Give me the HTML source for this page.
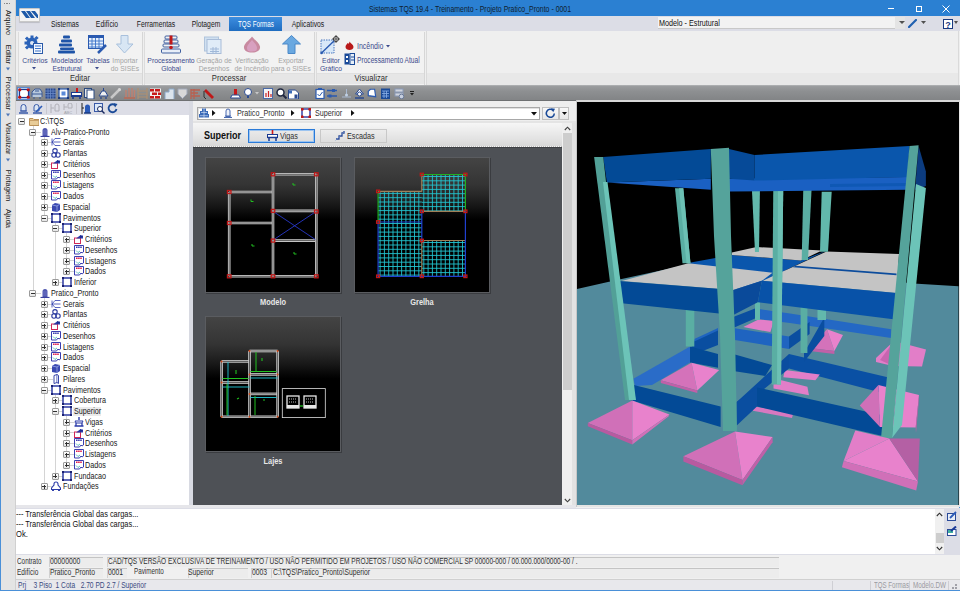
<!DOCTYPE html>
<html><head><meta charset="utf-8">
<style>
*{margin:0;padding:0;box-sizing:border-box}
html,body{width:960px;height:591px;overflow:hidden;background:#f0f0f0;font-family:"Liberation Sans",sans-serif;color:#222}
.a{position:absolute}
.t{position:absolute;white-space:nowrap}
</style></head><body>

<div class="a" style="left:0px;top:0px;width:960px;height:591px;background:#f0f0f0"></div>
<div class="a" style="left:1px;top:0px;width:14px;height:591px;background:#e4e4e4"></div>
<div class="a" style="left:15px;top:0px;width:1px;height:591px;background:#d0d0d0"></div>
<div class="a" style="left:0px;top:0px;width:1px;height:591px;background:#4a90d8"></div>
<div class="a" style="left:959px;top:0px;width:1px;height:591px;background:#4a90d8"></div>
<div class="a" style="left:0px;top:590px;width:960px;height:1px;background:#4a90d8"></div>
<div class="a" style="left:4.0px;top:3px;width:1.3px;height:1.3px;background:#888"></div>
<div class="a" style="left:6.3px;top:3px;width:1.3px;height:1.3px;background:#888"></div>
<div class="a" style="left:8.6px;top:3px;width:1.3px;height:1.3px;background:#888"></div>
<div class="t" style="left:-32px;top:17.3px;width:80px;height:11px;text-align:center;font-size:8px;line-height:11px;color:#202020;transform:rotate(90deg) scaleX(0.93);">Arquivo</div>
<div class="t" style="left:-32px;top:48.5px;width:80px;height:11px;text-align:center;font-size:8px;line-height:11px;color:#202020;transform:rotate(90deg) scaleX(0.93);">Editar</div>
<div class="t" style="left:-32px;top:87.8px;width:80px;height:11px;text-align:center;font-size:8px;line-height:11px;color:#202020;transform:rotate(90deg) scaleX(0.93);">Processar</div>
<div class="t" style="left:-32px;top:132.9px;width:80px;height:11px;text-align:center;font-size:8px;line-height:11px;color:#202020;transform:rotate(90deg) scaleX(0.93);">Visualizar</div>
<div class="t" style="left:-32px;top:179.5px;width:80px;height:11px;text-align:center;font-size:8px;line-height:11px;color:#202020;transform:rotate(90deg) scaleX(0.93);">Plotagem</div>
<div class="t" style="left:-32px;top:212.75px;width:80px;height:11px;text-align:center;font-size:8px;line-height:11px;color:#202020;transform:rotate(90deg) scaleX(0.93);">Ajuda</div>
<svg class="a" style="left:6px;top:66.5px" width="4" height="4" viewBox="0 0 4 4"><polygon points="0.5,0 3.5,2 0.5,4" fill="#5078b8" transform="rotate(90 2 2)"/></svg>
<svg class="a" style="left:6px;top:112.7px" width="4" height="4" viewBox="0 0 4 4"><polygon points="0.5,0 3.5,2 0.5,4" fill="#5078b8" transform="rotate(90 2 2)"/></svg>
<svg class="a" style="left:6px;top:158.4px" width="4" height="4" viewBox="0 0 4 4"><polygon points="0.5,0 3.5,2 0.5,4" fill="#5078b8" transform="rotate(90 2 2)"/></svg>
<div class="a" style="left:16px;top:0px;width:944px;height:16px;background:#2b80d2"></div>
<div class="t" style="left:170px;width:600px;text-align:center;top:3.83px;font-size:9px;line-height:10.35px;color:#102030;font-weight:normal;transform:scaleX(0.77);transform-origin:50% 0;">Sistemas TQS 19.4 - Treinamento - Projeto Pratico_Pronto - 0001</div>
<div class="a" style="left:888px;top:8px;width:6px;height:1px;background:#fff"></div>
<div class="a" style="left:915.5px;top:5.5px;width:6px;height:6px;border:1px solid #fff"></div>
<svg class="a" style="left:942px;top:5px" width="8" height="8" viewBox="0 0 8 8"><path d="M0.5 0.5L7.5 7.5M7.5 0.5L0.5 7.5" stroke="#fff" stroke-width="1"/></svg>
<div class="a" style="left:16px;top:16px;width:944px;height:15px;background:#dcdde6"></div>
<div class="a" style="left:19px;top:8px;width:21px;height:14px;background:#f4f4f4;border:1px solid #c8c8c8;border-radius:1px;box-shadow:0 1px 1px rgba(0,0,0,.15)"></div>
<svg class="a" style="left:21px;top:10px" width="17" height="9" viewBox="0 0 17 9"><path d="M0 1h4l5 7h-4z M5 1h4l5 7h-4z M10 1h4l3 4v3h-1z" fill="#1e5aa8"/></svg>
<div class="t" style="left:-235px;width:600px;text-align:center;top:19.72px;font-size:8.5px;line-height:9.77px;color:#202020;font-weight:normal;transform:scaleX(0.8);transform-origin:50% 0;">Sistemas</div>
<div class="t" style="left:-193px;width:600px;text-align:center;top:19.72px;font-size:8.5px;line-height:9.77px;color:#202020;font-weight:normal;transform:scaleX(0.8);transform-origin:50% 0;">Edifício</div>
<div class="t" style="left:-144.5px;width:600px;text-align:center;top:19.72px;font-size:8.5px;line-height:9.77px;color:#202020;font-weight:normal;transform:scaleX(0.8);transform-origin:50% 0;">Ferramentas</div>
<div class="t" style="left:-94px;width:600px;text-align:center;top:19.72px;font-size:8.5px;line-height:9.77px;color:#202020;font-weight:normal;transform:scaleX(0.8);transform-origin:50% 0;">Plotagem</div>
<div class="t" style="left:7.5px;width:600px;text-align:center;top:19.72px;font-size:8.5px;line-height:9.77px;color:#202020;font-weight:normal;transform:scaleX(0.8);transform-origin:50% 0;">Aplicativos</div>
<div class="a" style="left:229px;top:17px;width:53px;height:14px;background:linear-gradient(#3d8ee0,#1f6cc0)"></div>
<div class="t" style="left:-44.5px;width:600px;text-align:center;top:19.91px;font-size:8.5px;line-height:9.77px;color:#fff;font-weight:normal;transform:scaleX(0.74);transform-origin:50% 0;">TQS Formas</div>
<div class="a" style="left:658px;top:17px;width:247px;height:12px;background:#f2f2f2;border-bottom:1px solid #c8c8c8"></div>
<div class="a" style="left:895px;top:17px;width:10px;height:12px;background:#e4e4e4"></div>
<div class="t" style="left:659px;top:18.12px;font-size:9px;line-height:10.35px;color:#111;font-weight:normal;transform:scaleX(0.8);transform-origin:0 0;">Modelo - Estrutural</div>
<svg class="a" style="left:899px;top:21px" width="6" height="4" viewBox="0 0 6 4"><polygon points="0,0 6,0 3,3" fill="#505050"/></svg>
<svg class="a" style="left:908px;top:19px" width="9" height="9" viewBox="0 0 9 9"><path d="M1 8L8 1" stroke="#2060b0" stroke-width="2.2" stroke-linecap="round"/></svg>
<svg class="a" style="left:921px;top:21px" width="5" height="3" viewBox="0 0 5 3"><polygon points="0,0 5,0 2.5,3" fill="#505050"/></svg>
<svg class="a" style="left:943px;top:19px" width="10" height="10" viewBox="0 0 10 10"><rect x="0.5" y="0.5" width="9" height="9" fill="#fff" stroke="#1a3a80"/><text x="5" y="8.5" font-size="9" font-weight="bold" text-anchor="middle" fill="#1a3a80" font-family="Liberation Sans">?</text></svg>
<svg class="a" style="left:954px;top:21px" width="4" height="3" viewBox="0 0 4 3"><polygon points="0,0 4,0 2,3" fill="#505050"/></svg>
<div class="a" style="left:16px;top:31px;width:944px;height:54px;background:#efefef"></div>
<div class="a" style="left:17.5px;top:31.5px;width:125.0px;height:53px;background:#f2f2f2;border-left:1px solid #dcdcdc;border-right:1px solid #d6d6d6"></div>
<div class="a" style="left:18.5px;top:73.3px;width:123.0px;height:10.7px;background:#e6e6e6;border-top:1px solid #e0e0e0"></div>
<div class="t" style="left:-220.0px;width:600px;text-align:center;top:73.33px;font-size:9px;line-height:10.35px;color:#303030;font-weight:normal;transform:scaleX(0.85);transform-origin:50% 0;">Editar</div>
<div class="a" style="left:143.5px;top:31.5px;width:171.0px;height:53px;background:#f2f2f2;border-left:1px solid #dcdcdc;border-right:1px solid #d6d6d6"></div>
<div class="a" style="left:144.5px;top:73.3px;width:169.0px;height:10.7px;background:#e6e6e6;border-top:1px solid #e0e0e0"></div>
<div class="t" style="left:-71.0px;width:600px;text-align:center;top:73.33px;font-size:9px;line-height:10.35px;color:#303030;font-weight:normal;transform:scaleX(0.85);transform-origin:50% 0;">Processar</div>
<div class="a" style="left:316px;top:31.5px;width:109px;height:53px;background:#f2f2f2;border-left:1px solid #dcdcdc;border-right:1px solid #d6d6d6"></div>
<div class="a" style="left:317px;top:73.3px;width:107px;height:10.7px;background:#e6e6e6;border-top:1px solid #e0e0e0"></div>
<div class="t" style="left:70.5px;width:600px;text-align:center;top:73.33px;font-size:9px;line-height:10.35px;color:#303030;font-weight:normal;transform:scaleX(0.85);transform-origin:50% 0;">Visualizar</div>
<div class="t" style="left:-265.5px;width:600px;text-align:center;top:56.30px;font-size:8px;line-height:9.2px;color:#3c4a8c;font-weight:normal;transform:scaleX(0.85);transform-origin:50% 0;">Critérios</div>
<div class="t" style="left:-233.3px;width:600px;text-align:center;top:56.30px;font-size:8px;line-height:9.2px;color:#3c4a8c;font-weight:normal;transform:scaleX(0.85);transform-origin:50% 0;">Modelador</div>
<div class="t" style="left:-233.3px;width:600px;text-align:center;top:63.90px;font-size:8px;line-height:9.2px;color:#3c4a8c;font-weight:normal;transform:scaleX(0.85);transform-origin:50% 0;">Estrutural</div>
<div class="t" style="left:-202.2px;width:600px;text-align:center;top:56.30px;font-size:8px;line-height:9.2px;color:#3c4a8c;font-weight:normal;transform:scaleX(0.85);transform-origin:50% 0;">Tabelas</div>
<div class="t" style="left:-175.2px;width:600px;text-align:center;top:56.30px;font-size:8px;line-height:9.2px;color:#a4a4a4;font-weight:normal;transform:scaleX(0.85);transform-origin:50% 0;">Importar</div>
<div class="t" style="left:-175.2px;width:600px;text-align:center;top:63.90px;font-size:8px;line-height:9.2px;color:#a4a4a4;font-weight:normal;transform:scaleX(0.85);transform-origin:50% 0;">do SISEs</div>
<svg class="a" style="left:31.799999999999997px;top:67px" width="4" height="3" viewBox="0 0 4 3"><polygon points="0,0 4,0 2,2.5" fill="#3c4a8c"/></svg>
<svg class="a" style="left:95.3px;top:67px" width="4" height="3" viewBox="0 0 4 3"><polygon points="0,0 4,0 2,2.5" fill="#3c4a8c"/></svg>
<div class="t" style="left:-129px;width:600px;text-align:center;top:56.30px;font-size:8px;line-height:9.2px;color:#3c4a8c;font-weight:normal;transform:scaleX(0.85);transform-origin:50% 0;">Processamento</div>
<div class="t" style="left:-129px;width:600px;text-align:center;top:63.90px;font-size:8px;line-height:9.2px;color:#3c4a8c;font-weight:normal;transform:scaleX(0.85);transform-origin:50% 0;">Global</div>
<div class="t" style="left:-86.5px;width:600px;text-align:center;top:56.30px;font-size:8px;line-height:9.2px;color:#a4a4a4;font-weight:normal;transform:scaleX(0.85);transform-origin:50% 0;">Geração de</div>
<div class="t" style="left:-86.5px;width:600px;text-align:center;top:63.90px;font-size:8px;line-height:9.2px;color:#a4a4a4;font-weight:normal;transform:scaleX(0.85);transform-origin:50% 0;">Desenhos</div>
<div class="t" style="left:-48px;width:600px;text-align:center;top:56.30px;font-size:8px;line-height:9.2px;color:#a4a4a4;font-weight:normal;transform:scaleX(0.85);transform-origin:50% 0;">Verificação</div>
<div class="t" style="left:-48px;width:600px;text-align:center;top:63.90px;font-size:8px;line-height:9.2px;color:#a4a4a4;font-weight:normal;transform:scaleX(0.85);transform-origin:50% 0;">de Incêndio</div>
<div class="t" style="left:-9.5px;width:600px;text-align:center;top:56.30px;font-size:8px;line-height:9.2px;color:#a4a4a4;font-weight:normal;transform:scaleX(0.85);transform-origin:50% 0;">Exportar</div>
<div class="t" style="left:-9.5px;width:600px;text-align:center;top:63.90px;font-size:8px;line-height:9.2px;color:#a4a4a4;font-weight:normal;transform:scaleX(0.85);transform-origin:50% 0;">para o SISEs</div>
<div class="t" style="left:30.5px;width:600px;text-align:center;top:56.30px;font-size:8px;line-height:9.2px;color:#3c4a8c;font-weight:normal;transform:scaleX(0.85);transform-origin:50% 0;">Editor</div>
<div class="t" style="left:30.5px;width:600px;text-align:center;top:63.90px;font-size:8px;line-height:9.2px;color:#3c4a8c;font-weight:normal;transform:scaleX(0.85);transform-origin:50% 0;">Gráfico</div>
<div class="t" style="left:356.5px;top:41.73px;font-size:8.3px;line-height:9.54px;color:#3c4a8c;font-weight:normal;transform:scaleX(0.84);transform-origin:0 0;">Incêndio</div>
<svg class="a" style="left:386px;top:45px" width="4" height="3" viewBox="0 0 4 3"><polygon points="0,0 4,0 2,2.5" fill="#3c4a8c"/></svg>
<div class="t" style="left:356.5px;top:55.63px;font-size:8.3px;line-height:9.54px;color:#3c4a8c;font-weight:normal;transform:scaleX(0.8);transform-origin:0 0;">Processamento Atual</div>
<svg class="a" style="left:24px;top:35px" width="20" height="19" viewBox="0 0 20 19"><g fill="#2a62b8"><circle cx="8" cy="8" r="5.5"/><rect x="6.5" y="0.5" width="3" height="3"/><rect x="0.5" y="6.5" width="3" height="3"/><rect x="1.5" y="2" width="3" height="3" transform="rotate(45 3 3.5)"/><rect x="11" y="1.5" width="3" height="3" transform="rotate(45 12.5 3)"/><rect x="1.5" y="11" width="3" height="3" transform="rotate(45 3 12.5)"/></g><circle cx="8" cy="8" r="2" fill="#dfe8f4"/><rect x="9.5" y="8.5" width="9" height="10" fill="#f4f8ff" stroke="#2a5aa8"/><path d="M11 11h6M11 13.5h6M11 16h6" stroke="#3a72c8" stroke-width="1.2"/></svg>
<svg class="a" style="left:57px;top:35px" width="19" height="19" viewBox="0 0 19 19"><g fill="#1e54a8"><rect x="6" y="0.5" width="7" height="3" rx="1"/><rect x="4" y="4.5" width="11" height="3" rx="1"/><rect x="2" y="8.5" width="13" height="3" rx="1"/><rect x="3" y="12.5" width="14" height="2.5" rx="1"/><rect x="1" y="15.5" width="17" height="3" rx="1"/></g></svg>
<svg class="a" style="left:88px;top:35px" width="20" height="19" viewBox="0 0 20 19"><rect x="0.5" y="0.5" width="15" height="13" fill="#e8f0fc" stroke="#2a5ab0"/><rect x="0.5" y="0.5" width="15" height="2.5" fill="#2a5ab0"/><path d="M4 3v10M7.5 3v10M11 3v10M1 6h14M1 9h14M1 12h14" stroke="#3a72c8" stroke-width="0.9"/><path d="M10 18L18 10" stroke="#2a5ab0" stroke-width="2.5"/></svg>
<svg class="a" style="left:116px;top:35px" width="18" height="19" viewBox="0 0 18 19"><polygon points="5,0.5 12,0.5 12,9 17,9 8.5,18 0.5,9 5,9" fill="#d8e6f4" stroke="#a8c0dc"/></svg>
<svg class="a" style="left:161px;top:35px" width="20" height="19" viewBox="0 0 20 19"><rect x="4" y="1" width="12" height="3" rx="1" fill="none" stroke="#4060a0"/><rect x="3" y="5" width="14" height="3" rx="1" fill="none" stroke="#4060a0"/><rect x="2" y="9" width="16" height="3" rx="1" fill="none" stroke="#4060a0"/><rect x="0.5" y="14" width="19" height="4" rx="1" fill="#e8eef8" stroke="#4060a0"/><path d="M10 0.5v9" stroke="#c01818" stroke-width="3"/><circle cx="10" cy="12.5" r="1.8" fill="#c01818"/></svg>
<svg class="a" style="left:204px;top:35px" width="19" height="19" viewBox="0 0 19 19"><rect x="0.5" y="2" width="14" height="14" fill="#d0e0f0" stroke="#b0c4dc"/><rect x="3" y="4.5" width="14" height="14" fill="#e0ecf8" stroke="#a8bcd8"/><path d="M6 14h9M6 16.5h9M9 12v6M12 12v6" stroke="#a0b8d8"/></svg>
<svg class="a" style="left:243px;top:36px" width="18" height="17" viewBox="0 0 18 17"><path d="M9 0.5c2 3 7 6 8 10c0.5 4-3 6-8 6s-8.5-2-8-6c1-4 6-7 8-10z" fill="#c88aa0"/><path d="M9 4c1.5 2 5 5 5 8s-2 3.5-5 3.5s-5-.5-5-3.5s3.5-6 5-8z" fill="#d8a0c0"/></svg>
<svg class="a" style="left:282px;top:35px" width="19" height="19" viewBox="0 0 19 19"><polygon points="9.5,0.5 18.5,9 13,9 13,18.5 6,18.5 6,9 0.5,9" fill="#6aa8e0" stroke="#4a88c8"/></svg>
<svg class="a" style="left:320px;top:35px" width="21" height="20" viewBox="0 0 21 20"><rect x="1" y="5" width="13" height="13" fill="#d8e8f8" stroke="#4a78c0" stroke-dasharray="1.5 1"/><path d="M1.5 18L16 4" stroke="#2a5ab0" stroke-width="1.4"/><circle cx="16" cy="4" r="2.5" fill="#fff" stroke="#303030"/><path d="M16 0v8M12 4h8" stroke="#303030" stroke-width="0.8"/><circle cx="1.5" cy="18" r="1.3" fill="#2a5ab0"/></svg>
<svg class="a" style="left:345px;top:41px" width="9" height="9" viewBox="0 0 9 9"><path d="M4.5 0.5c1 2 4 3 4 5.5c0 2-2 3-4 3s-4-1-4-3c0-2 1.5-2.5 2-4c1 1 1.5 1 2-1.5z" fill="#b81818"/></svg>
<svg class="a" style="left:344px;top:53px" width="11" height="12" viewBox="0 0 11 12"><rect x="0.5" y="0.5" width="5" height="11" fill="#1a4a98"/><rect x="6" y="0.5" width="4.5" height="11" fill="#e8f0f8" stroke="#1a4a98"/><rect x="2" y="3" width="2" height="2" fill="#fff"/><rect x="2" y="7" width="2" height="2" fill="#fff"/><path d="M7 4h3M7 7h3" stroke="#1a4a98"/></svg>
<div class="a" style="left:425.5px;top:31px;width:1px;height:54px;background:#dadada"></div>
<div class="a" style="left:427px;top:73px;width:531px;height:12px;background:#e8e8e8"></div>
<div class="a" style="left:957.5px;top:31px;width:1px;height:54px;background:#dadada"></div>
<div class="a" style="left:16px;top:85px;width:944px;height:16px;background:linear-gradient(#b4b6b8 0,#9a9c9e 1.5px,#8e9092 40%,#828486 100%);border-bottom:1px solid #6e7072"></div>
<div class="a" style="left:16.5px;top:86.5px;width:13px;height:13.5px;background:#c8dcf4;border:1px solid #5a8ad0"></div>
<svg class="a" style="left:18px;top:88px" width="12" height="11" viewBox="0 0 12 11"><rect x="1.5" y="1.5" width="9" height="8" fill="#fff" stroke="#1a3a90" stroke-width="1.2"/><g fill="#c01010"><circle cx="1.8" cy="1.8" r="1.6"/><circle cx="10.2" cy="1.8" r="1.6"/><circle cx="1.8" cy="9.2" r="1.6"/><circle cx="10.2" cy="9.2" r="1.6"/></g></svg>
<svg class="a" style="left:31px;top:88px" width="12" height="11" viewBox="0 0 12 11"><path d="M1 9V4l3-3h5l2 3v5M1 6h10M3 9v2M9 9v2M4 3h4" fill="#b8c8dc" stroke="#3a5a98"/></svg>
<svg class="a" style="left:45px;top:88px" width="12" height="11" viewBox="0 0 12 11"><rect x="0.5" y="0.5" width="10" height="10" fill="#2a4a90"/><path d="M3 0v11M5.5 0v11M8 0v11M0 3h11M0 5.5h11M0 8h11" stroke="#6a8ac8" stroke-width="0.8"/></svg>
<svg class="a" style="left:58px;top:88px" width="12" height="11" viewBox="0 0 12 11"><rect x="1" y="1" width="9" height="9" fill="#fff" stroke="#2a5ab0" stroke-width="1.2"/><rect x="3.5" y="3.5" width="4" height="4" fill="#5a8ad8"/><g fill="#1a3a80"><circle cx="1" cy="1" r="1.2"/><circle cx="10" cy="1" r="1.2"/><circle cx="1" cy="10" r="1.2"/><circle cx="10" cy="10" r="1.2"/></g></svg>
<svg class="a" style="left:71px;top:88px" width="12" height="11" viewBox="0 0 12 11"><path d="M6 0v4" stroke="#d01818" stroke-width="2"/><rect x="0.5" y="4.5" width="10" height="4" fill="#fff" stroke="#1a3a90"/><rect x="0.5" y="7" width="10" height="2" fill="#1a3a90"/><path d="M2 9v2M9 9v2" stroke="#1a3a90" stroke-width="1.5"/></svg>
<svg class="a" style="left:84px;top:88px" width="12" height="11" viewBox="0 0 12 11"><rect x="0.5" y="0.5" width="7" height="9" fill="#e8e8e8" stroke="#2a4a80"/><rect x="3" y="2" width="7" height="9" fill="#fff" stroke="#2a4a80"/></svg>
<svg class="a" style="left:97.5px;top:88px" width="12" height="11" viewBox="0 0 12 11"><path d="M5.5 0v3M1 8l3-5h3l3 5z" fill="#f0f0f0" stroke="#2a4a90"/><path d="M3 9v2M8 9v2" stroke="#2a4a90" stroke-width="1.3"/></svg>
<svg class="a" style="left:110px;top:88px" width="12" height="11" viewBox="0 0 12 11"><path d="M1 10L10 1" stroke="#c8c8c8" stroke-width="2.5"/><circle cx="9.5" cy="1.5" r="1.5" fill="#d8d8d8"/></svg>
<svg class="a" style="left:123.5px;top:88px" width="12" height="11" viewBox="0 0 12 11"><path d="M2 2v9M5 0v11M8 0v11M10.5 2v9" stroke="#c08070" stroke-width="1.4"/><rect x="0" y="9" width="11" height="2" fill="#b07060"/></svg>
<svg class="a" style="left:137px;top:88px" width="12" height="11" viewBox="0 0 12 11"><path d="M1 0v11M10 0v11M1 3h9M1 6h9M1 9h9" stroke="#b09070" stroke-width="1.2" fill="none"/></svg>
<svg class="a" style="left:150px;top:88px" width="12" height="11" viewBox="0 0 12 11"><rect x="0" y="0.5" width="11" height="10" fill="#f0f0f0"/><g fill="#c81818"><rect x="0" y="1" width="4" height="2.5"/><rect x="5" y="1" width="5" height="2.5"/><rect x="2" y="4.5" width="5" height="2.5"/><rect x="8" y="4.5" width="3" height="2.5"/><rect x="0" y="8" width="4" height="2.5"/><rect x="5" y="8" width="5" height="2.5"/></g></svg>
<svg class="a" style="left:163.5px;top:88px" width="12" height="11" viewBox="0 0 12 11"><path d="M1 11V4h4V1h5v10" fill="#dce4ec" stroke="#8aa8c8"/></svg>
<svg class="a" style="left:176.5px;top:88px" width="12" height="11" viewBox="0 0 12 11"><path d="M1 1h9v5l-4.5 4.5L1 6z" fill="#d8d8d8" stroke="#a0a8b8"/></svg>
<svg class="a" style="left:189.5px;top:88px" width="12" height="11" viewBox="0 0 12 11"><path d="M1 1v10M4 1v10M1 2h9M1 5h7M1 8h9" stroke="#b86050" stroke-width="1.3"/></svg>
<svg class="a" style="left:203px;top:88px" width="12" height="11" viewBox="0 0 12 11"><path d="M1 3l2-2 8 8-2 2z" fill="#c01818"/><path d="M1 3v6l2 2" stroke="#303030" fill="none"/></svg>
<svg class="a" style="left:229.5px;top:88px" width="12" height="11" viewBox="0 0 12 11"><path d="M4 1h3v6h-3z" fill="#c81818"/><path d="M2 7h7l1.5 3h-10z" fill="#fff" stroke="#2a4a90"/></svg>
<svg class="a" style="left:244px;top:88px" width="12" height="11" viewBox="0 0 12 11"><circle cx="4" cy="4" r="3.5" fill="#fff" stroke="#2a4a90"/><path d="M3 8h2v2h-2z" fill="#2a4a90"/></svg>
<svg class="a" style="left:255px;top:92px" width="4" height="3" viewBox="0 0 4 3"><polygon points="0,0 4,0 2,2.5" fill="#c8c8c8"/></svg>
<svg class="a" style="left:262.5px;top:88px" width="12" height="11" viewBox="0 0 12 11"><rect x="0.5" y="0.5" width="9" height="10" fill="#f4f4f4" stroke="#4a6aa8"/><path d="M3 9V5M5.5 9V3M8 9V6" stroke="#c82020" stroke-width="1.2" fill="none"/></svg>
<svg class="a" style="left:275.5px;top:88px" width="12" height="11" viewBox="0 0 12 11"><circle cx="4.5" cy="4.5" r="3.5" fill="#fff" stroke="#202840" stroke-width="1.5"/><path d="M7 7l3.5 3.5" stroke="#202840" stroke-width="2"/></svg>
<svg class="a" style="left:288px;top:88px" width="12" height="11" viewBox="0 0 12 11"><path d="M0.5 2h7l3 3v6h-10z" fill="#fff" stroke="#2a4a90"/><rect x="1" y="2.5" width="3" height="3" fill="#3a6ab8"/><rect x="6.5" y="6.5" width="3" height="4" fill="#2a4a90"/></svg>
<svg class="a" style="left:314.5px;top:88px" width="12" height="11" viewBox="0 0 12 11"><rect x="1" y="1.5" width="8" height="9" fill="#fff" stroke="#2a5ab0" stroke-width="1.2"/><rect x="3" y="0" width="4" height="2" fill="#2a5ab0"/><path d="M2.5 6l2 2 3-4" stroke="#2a5ab0" fill="none"/></svg>
<svg class="a" style="left:327px;top:88px" width="12" height="11" viewBox="0 0 12 11"><path d="M0 2.5h10M0 8h10" stroke="#2a5ab0" stroke-width="1.5"/><rect x="5" y="1" width="3" height="3" fill="#2a5ab0"/><rect x="1.5" y="6.5" width="3" height="3" fill="#2a5ab0"/></svg>
<svg class="a" style="left:341px;top:88px" width="12" height="11" viewBox="0 0 12 11"><path d="M5.5 1v6M1 9h9" stroke="#a8b8d0"/><circle cx="5.5" cy="7" r="1.5" fill="#c0d0e4"/></svg>
<svg class="a" style="left:353.5px;top:88px" width="12" height="11" viewBox="0 0 12 11"><path d="M5.5 1l4 5h-8z" fill="#fff" stroke="#2a4a90"/><circle cx="5.5" cy="6" r="2" fill="#fff" stroke="#2a4a90"/><path d="M1 10h9" stroke="#2a4a90" stroke-width="1.5"/></svg>
<svg class="a" style="left:367px;top:88px" width="12" height="11" viewBox="0 0 12 11"><path d="M1 4l3-3h3l3 3-4.5 6z" fill="#fff" stroke="#2a5ab0" stroke-width="1.2" transform="rotate(-45 5.5 5.5)"/></svg>
<svg class="a" style="left:380px;top:88px" width="12" height="11" viewBox="0 0 12 11"><rect x="1" y="0.5" width="9" height="10.5" fill="#1a4a98"/><path d="M2 3h7M2 5.5h7M2 8h7M4 3v7M6.5 3v7" stroke="#8ab0e8" stroke-width="0.8"/></svg>
<svg class="a" style="left:393.5px;top:88px" width="12" height="11" viewBox="0 0 12 11"><rect x="1" y="1" width="8" height="3" fill="#d0d4dc" stroke="#8a9ab8"/><rect x="1" y="5" width="8" height="3" fill="#d0d4dc" stroke="#8a9ab8"/><circle cx="7.5" cy="8.5" r="2.3" fill="#c8d0e0" stroke="#6a7a98"/></svg>
<svg class="a" style="left:410px;top:91px" width="4" height="5" viewBox="0 0 4 5"><path d="M0 0.5h4" stroke="#202020"/><polygon points="0,2 4,2 2,4.5" fill="#202020"/></svg>
<div class="a" style="left:16px;top:101px;width:173px;height:14px;background:#dcdde6"></div>
<div class="a" style="left:16px;top:115px;width:173px;height:391px;background:#fff"></div>
<svg class="a" style="left:18px;top:103px" width="11" height="11" viewBox="0 0 11 11"><path d="M3 4a2.5 2.5 0 0 1 5 0v4h-5z" fill="#dce6f4" stroke="#3a5aa8"/><path d="M1 10h9" stroke="#3a5aa8" stroke-width="1.5"/><path d="M2 8h7" stroke="#3a5aa8"/></svg>
<svg class="a" style="left:31.5px;top:103px" width="11" height="11" viewBox="0 0 11 11"><path d="M2 4a2.5 2.5 0 0 1 5 0v4h-5z" fill="#dce6f4" stroke="#3a5aa8"/><path d="M1 10h9" stroke="#3a5aa8" stroke-width="1.5"/><path d="M4 9l6-6" stroke="#2a5ab8" stroke-width="1.6"/></svg>
<div class="a" style="left:45.5px;top:103px;width:1px;height:11px;background:#c8c8d0"></div>
<svg class="a" style="left:50px;top:103px" width="10" height="11" viewBox="0 0 10 11"><path d="M1 1v9M1 5h3M5 3a2 2 0 0 1 4 0v5h-4z" fill="none" stroke="#b0b0b8"/></svg>
<svg class="a" style="left:63px;top:103px" width="10" height="11" viewBox="0 0 10 11"><path d="M1 1v6M1 4h3M5 2a2 2 0 0 1 4 0v3h-4z" fill="none" stroke="#b0b0b8"/><text x="5" y="10.5" font-size="4" text-anchor="middle" fill="#a0a0a8" font-family="Liberation Sans">ABC</text></svg>
<div class="a" style="left:76px;top:103px;width:1px;height:11px;background:#c8c8d0"></div>
<svg class="a" style="left:80.5px;top:103px" width="10" height="11" viewBox="0 0 10 11"><path d="M1 0v11M1 5h2" stroke="#202020"/><path d="M4 4a2.5 2.5 0 0 1 5 0v6h-5z" fill="#2a5ab8"/><path d="M3 10h7" stroke="#1a3a80" stroke-width="1.5"/></svg>
<svg class="a" style="left:94px;top:103px" width="11" height="11" viewBox="0 0 11 11"><rect x="0.5" y="0.5" width="8" height="8" fill="#dce8f8" stroke="#3a5aa8"/><circle cx="6" cy="6" r="2.5" fill="#fff" stroke="#1a2a60"/><path d="M8 8l2.5 2.5" stroke="#1a2a60" stroke-width="1.4"/></svg>
<svg class="a" style="left:107px;top:103px" width="11" height="11" viewBox="0 0 11 11"><path d="M8.5 2.5A4 4 0 1 0 9.5 6" fill="none" stroke="#1a4a98" stroke-width="1.8"/><polygon points="6.5,0 10.5,1 8,4.5" fill="#1a4a98"/></svg>
<svg width="0" height="0" style="position:absolute"><defs>
<g id="i_folder"><path d="M0.5 2.5h3.5l1 1h5v6h-9.5z" fill="#e8cc98" stroke="#b89058"/><path d="M0.5 4.5h9.5" stroke="#c8a068"/></g>
<g id="i_bld"><path d="M2.5 9V3.5a2.5 2.5 0 0 1 5 0V9z" fill="#5058b0"/><path d="M0.5 9.5h9" stroke="#3a40a0" stroke-width="1.2"/><path d="M4 3v5M6 3v5" stroke="#8088d0" stroke-width="0.6"/></g>
<g id="i_ger"><path d="M1 1.5v7M1 5h8.5M1 5l3-3.5h5.5M1 5l3 3.5h5.5" stroke="#3040b0" stroke-width="0.8" fill="none"/></g>
<g id="i_pla" fill="none" stroke="#2a3aa0" stroke-width="1.1"><circle cx="4" cy="2.8" r="2.2"/><circle cx="3" cy="7" r="2.2"/><circle cx="7" cy="7" r="2.2"/></g>
<g id="i_cri"><rect x="0.5" y="4" width="6" height="5.5" fill="#fff" stroke="#d02858"/><path d="M2 4.5l4-3h3v3h-4z" fill="#2a3aa8"/><path d="M6 1l3 1.5-3 1.5z" fill="#1a2a90"/></g>
<g id="i_doc"><path d="M0.5 0.5h9v6.5l-1.5 1-1 -1-1.5 2h-5z" fill="#fff" stroke="#3a3eb0"/><path d="M2 2.3h6" stroke="#e02050" stroke-width="1.6" stroke-dasharray="1.6 0.5"/><path d="M2 5.5l2 2 2-1.5" stroke="#20a0a0" stroke-width="0.7" fill="none"/></g>
<g id="i_dwg"><path d="M0.5 0.5h9v6.5l-1.5 1-1 -1-1.5 2h-5z" fill="#fff" stroke="#3a3eb0"/><path d="M2 2.3h6" stroke="#3a3eb0" stroke-width="1.6" stroke-dasharray="1.6 0.5"/><path d="M2 5.5l2 2 2-1.5" stroke="#20a0a0" stroke-width="0.7" fill="none"/></g>
<g id="i_esp"><path d="M1 3l3-2 5 1v6l-3 2-5-1z" fill="#3a48b0"/><path d="M1 3l5 1 3-2M6 4v6" stroke="#9aa8e8" stroke-width="0.8" fill="none"/></g>
<g id="i_pav"><rect x="1" y="1" width="8" height="8" fill="#fff" stroke="#3a46a8" stroke-width="1.6"/><g fill="#1a2070"><rect x="0" y="0" width="2" height="2"/><rect x="8" y="0" width="2" height="2"/><rect x="0" y="8" width="2" height="2"/><rect x="8" y="8" width="2" height="2"/></g></g>
<g id="i_pil"><path d="M3 1.5l3-1v8l-3 1z" fill="#fff" stroke="#3a46a8"/><path d="M6 0.5l1.5 1v8l-1.5-1" fill="#c8d0f0" stroke="#3a46a8"/></g>
<g id="i_vig"><path d="M5 0v3" stroke="#2a3aa8" stroke-width="1.4"/><path d="M1 4h8l-1 2h-6z" fill="#fff" stroke="#2a3aa8"/><path d="M0.5 9h9M2 6v3M8 6v3" stroke="#2a3aa8" stroke-width="1.3"/></g>
<g id="i_fun"><path d="M3 3a2 2 0 0 1 4 0v1l2.5 3v1.5h-9V7l2.5-3z" fill="#fff" stroke="#2a3aa8" stroke-width="1.1"/><circle cx="2" cy="9.3" r="1" fill="#2a3aa8"/><circle cx="8" cy="9.3" r="1" fill="#2a3aa8"/></g>
</defs></svg>
<div class="a" style="left:32.5px;top:125px;width:1px;height:167.75px;background:#d4d4d4"></div>
<div class="a" style="left:43.7px;top:136.5px;width:1px;height:81.0px;background:#d4d4d4"></div>
<div class="a" style="left:43.7px;top:297.75px;width:1px;height:188.5px;background:#d4d4d4"></div>
<div class="a" style="left:54.9px;top:222.5px;width:1px;height:59.5px;background:#d4d4d4"></div>
<div class="a" style="left:54.9px;top:394.5px;width:1px;height:81.0px;background:#d4d4d4"></div>
<div class="a" style="left:66.1px;top:233.25px;width:1px;height:38.0px;background:#d4d4d4"></div>
<div class="a" style="left:66.1px;top:416.0px;width:1px;height:48.75px;background:#d4d4d4"></div>
<div class="a" style="left:73.3px;top:406.8px;width:27.5px;height:9.6px;background:#ebebeb"></div>
<div class="a" style="left:18.2px;top:117.75px;width:7px;height:7px;background:linear-gradient(#fff,#e4e4e4);border:1px solid #9a9a9a;border-radius:1px"></div>
<div class="a" style="left:19.7px;top:120.75px;width:4px;height:1px;background:#303030"></div>
<svg class="a" style="left:28.8px;top:115.75px" width="10" height="10" viewBox="0 0 10 10"><use href="#i_folder"/></svg>
<div class="t" style="left:40.2px;top:115.88px;font-size:9px;line-height:10.35px;color:#202020;font-weight:normal;transform:scaleX(0.8);transform-origin:0 0;">C:\TQS</div>
<div class="a" style="left:35.4px;top:132px;width:6px;height:1px;background:#d4d4d4"></div>
<div class="a" style="left:29.4px;top:128.5px;width:7px;height:7px;background:linear-gradient(#fff,#e4e4e4);border:1px solid #9a9a9a;border-radius:1px"></div>
<div class="a" style="left:30.9px;top:131.5px;width:4px;height:1px;background:#303030"></div>
<svg class="a" style="left:40.0px;top:126.5px" width="10" height="10" viewBox="0 0 10 10"><use href="#i_bld"/></svg>
<div class="t" style="left:51.400000000000006px;top:126.63px;font-size:9px;line-height:10.35px;color:#202020;font-weight:normal;transform:scaleX(0.8);transform-origin:0 0;">Alv-Pratico-Pronto</div>
<div class="a" style="left:46.599999999999994px;top:142px;width:6px;height:1px;background:#d4d4d4"></div>
<div class="a" style="left:40.599999999999994px;top:139.25px;width:7px;height:7px;background:linear-gradient(#fff,#e4e4e4);border:1px solid #9a9a9a;border-radius:1px"></div>
<div class="a" style="left:42.099999999999994px;top:142.25px;width:4px;height:1px;background:#303030"></div>
<div class="a" style="left:43.599999999999994px;top:140.75px;width:1px;height:4px;background:#303030"></div>
<svg class="a" style="left:51.2px;top:137.25px" width="10" height="10" viewBox="0 0 10 10"><use href="#i_ger"/></svg>
<div class="t" style="left:62.6px;top:137.38px;font-size:9px;line-height:10.35px;color:#202020;font-weight:normal;transform:scaleX(0.8);transform-origin:0 0;">Gerais</div>
<div class="a" style="left:46.599999999999994px;top:153px;width:6px;height:1px;background:#d4d4d4"></div>
<div class="a" style="left:40.599999999999994px;top:150.0px;width:7px;height:7px;background:linear-gradient(#fff,#e4e4e4);border:1px solid #9a9a9a;border-radius:1px"></div>
<div class="a" style="left:42.099999999999994px;top:153.0px;width:4px;height:1px;background:#303030"></div>
<div class="a" style="left:43.599999999999994px;top:151.5px;width:1px;height:4px;background:#303030"></div>
<svg class="a" style="left:51.2px;top:148.0px" width="10" height="10" viewBox="0 0 10 10"><use href="#i_pla"/></svg>
<div class="t" style="left:62.6px;top:148.12px;font-size:9px;line-height:10.35px;color:#202020;font-weight:normal;transform:scaleX(0.8);transform-origin:0 0;">Plantas</div>
<div class="a" style="left:46.599999999999994px;top:164px;width:6px;height:1px;background:#d4d4d4"></div>
<div class="a" style="left:40.599999999999994px;top:160.75px;width:7px;height:7px;background:linear-gradient(#fff,#e4e4e4);border:1px solid #9a9a9a;border-radius:1px"></div>
<div class="a" style="left:42.099999999999994px;top:163.75px;width:4px;height:1px;background:#303030"></div>
<div class="a" style="left:43.599999999999994px;top:162.25px;width:1px;height:4px;background:#303030"></div>
<svg class="a" style="left:51.2px;top:158.75px" width="10" height="10" viewBox="0 0 10 10"><use href="#i_cri"/></svg>
<div class="t" style="left:62.6px;top:158.88px;font-size:9px;line-height:10.35px;color:#202020;font-weight:normal;transform:scaleX(0.8);transform-origin:0 0;">Critérios</div>
<div class="a" style="left:46.599999999999994px;top:174px;width:6px;height:1px;background:#d4d4d4"></div>
<div class="a" style="left:40.599999999999994px;top:171.5px;width:7px;height:7px;background:linear-gradient(#fff,#e4e4e4);border:1px solid #9a9a9a;border-radius:1px"></div>
<div class="a" style="left:42.099999999999994px;top:174.5px;width:4px;height:1px;background:#303030"></div>
<div class="a" style="left:43.599999999999994px;top:173.0px;width:1px;height:4px;background:#303030"></div>
<svg class="a" style="left:51.2px;top:169.5px" width="10" height="10" viewBox="0 0 10 10"><use href="#i_dwg"/></svg>
<div class="t" style="left:62.6px;top:169.62px;font-size:9px;line-height:10.35px;color:#202020;font-weight:normal;transform:scaleX(0.8);transform-origin:0 0;">Desenhos</div>
<div class="a" style="left:46.599999999999994px;top:185px;width:6px;height:1px;background:#d4d4d4"></div>
<div class="a" style="left:40.599999999999994px;top:182.25px;width:7px;height:7px;background:linear-gradient(#fff,#e4e4e4);border:1px solid #9a9a9a;border-radius:1px"></div>
<div class="a" style="left:42.099999999999994px;top:185.25px;width:4px;height:1px;background:#303030"></div>
<div class="a" style="left:43.599999999999994px;top:183.75px;width:1px;height:4px;background:#303030"></div>
<svg class="a" style="left:51.2px;top:180.25px" width="10" height="10" viewBox="0 0 10 10"><use href="#i_doc"/></svg>
<div class="t" style="left:62.6px;top:180.38px;font-size:9px;line-height:10.35px;color:#202020;font-weight:normal;transform:scaleX(0.8);transform-origin:0 0;">Listagens</div>
<div class="a" style="left:46.599999999999994px;top:196px;width:6px;height:1px;background:#d4d4d4"></div>
<div class="a" style="left:40.599999999999994px;top:193.0px;width:7px;height:7px;background:linear-gradient(#fff,#e4e4e4);border:1px solid #9a9a9a;border-radius:1px"></div>
<div class="a" style="left:42.099999999999994px;top:196.0px;width:4px;height:1px;background:#303030"></div>
<div class="a" style="left:43.599999999999994px;top:194.5px;width:1px;height:4px;background:#303030"></div>
<svg class="a" style="left:51.2px;top:191.0px" width="10" height="10" viewBox="0 0 10 10"><use href="#i_doc"/></svg>
<div class="t" style="left:62.6px;top:191.12px;font-size:9px;line-height:10.35px;color:#202020;font-weight:normal;transform:scaleX(0.8);transform-origin:0 0;">Dados</div>
<div class="a" style="left:46.599999999999994px;top:207px;width:6px;height:1px;background:#d4d4d4"></div>
<div class="a" style="left:40.599999999999994px;top:203.75px;width:7px;height:7px;background:linear-gradient(#fff,#e4e4e4);border:1px solid #9a9a9a;border-radius:1px"></div>
<div class="a" style="left:42.099999999999994px;top:206.75px;width:4px;height:1px;background:#303030"></div>
<div class="a" style="left:43.599999999999994px;top:205.25px;width:1px;height:4px;background:#303030"></div>
<svg class="a" style="left:51.2px;top:201.75px" width="10" height="10" viewBox="0 0 10 10"><use href="#i_esp"/></svg>
<div class="t" style="left:62.6px;top:201.88px;font-size:9px;line-height:10.35px;color:#202020;font-weight:normal;transform:scaleX(0.8);transform-origin:0 0;">Espacial</div>
<div class="a" style="left:46.599999999999994px;top:218px;width:6px;height:1px;background:#d4d4d4"></div>
<div class="a" style="left:40.599999999999994px;top:214.5px;width:7px;height:7px;background:linear-gradient(#fff,#e4e4e4);border:1px solid #9a9a9a;border-radius:1px"></div>
<div class="a" style="left:42.099999999999994px;top:217.5px;width:4px;height:1px;background:#303030"></div>
<svg class="a" style="left:51.2px;top:212.5px" width="10" height="10" viewBox="0 0 10 10"><use href="#i_pav"/></svg>
<div class="t" style="left:62.6px;top:212.62px;font-size:9px;line-height:10.35px;color:#202020;font-weight:normal;transform:scaleX(0.8);transform-origin:0 0;">Pavimentos</div>
<div class="a" style="left:57.8px;top:228px;width:6px;height:1px;background:#d4d4d4"></div>
<div class="a" style="left:51.8px;top:225.25px;width:7px;height:7px;background:linear-gradient(#fff,#e4e4e4);border:1px solid #9a9a9a;border-radius:1px"></div>
<div class="a" style="left:53.3px;top:228.25px;width:4px;height:1px;background:#303030"></div>
<svg class="a" style="left:62.39999999999999px;top:223.25px" width="10" height="10" viewBox="0 0 10 10"><use href="#i_pav"/></svg>
<div class="t" style="left:73.8px;top:223.38px;font-size:9px;line-height:10.35px;color:#202020;font-weight:normal;transform:scaleX(0.8);transform-origin:0 0;">Superior</div>
<div class="a" style="left:69.0px;top:239px;width:6px;height:1px;background:#d4d4d4"></div>
<div class="a" style="left:63.0px;top:236.0px;width:7px;height:7px;background:linear-gradient(#fff,#e4e4e4);border:1px solid #9a9a9a;border-radius:1px"></div>
<div class="a" style="left:64.5px;top:239.0px;width:4px;height:1px;background:#303030"></div>
<div class="a" style="left:66.0px;top:237.5px;width:1px;height:4px;background:#303030"></div>
<svg class="a" style="left:73.6px;top:234.0px" width="10" height="10" viewBox="0 0 10 10"><use href="#i_cri"/></svg>
<div class="t" style="left:85.0px;top:234.12px;font-size:9px;line-height:10.35px;color:#202020;font-weight:normal;transform:scaleX(0.8);transform-origin:0 0;">Critérios</div>
<div class="a" style="left:69.0px;top:250px;width:6px;height:1px;background:#d4d4d4"></div>
<div class="a" style="left:63.0px;top:246.75px;width:7px;height:7px;background:linear-gradient(#fff,#e4e4e4);border:1px solid #9a9a9a;border-radius:1px"></div>
<div class="a" style="left:64.5px;top:249.75px;width:4px;height:1px;background:#303030"></div>
<div class="a" style="left:66.0px;top:248.25px;width:1px;height:4px;background:#303030"></div>
<svg class="a" style="left:73.6px;top:244.75px" width="10" height="10" viewBox="0 0 10 10"><use href="#i_dwg"/></svg>
<div class="t" style="left:85.0px;top:244.88px;font-size:9px;line-height:10.35px;color:#202020;font-weight:normal;transform:scaleX(0.8);transform-origin:0 0;">Desenhos</div>
<div class="a" style="left:69.0px;top:260px;width:6px;height:1px;background:#d4d4d4"></div>
<div class="a" style="left:63.0px;top:257.5px;width:7px;height:7px;background:linear-gradient(#fff,#e4e4e4);border:1px solid #9a9a9a;border-radius:1px"></div>
<div class="a" style="left:64.5px;top:260.5px;width:4px;height:1px;background:#303030"></div>
<div class="a" style="left:66.0px;top:259.0px;width:1px;height:4px;background:#303030"></div>
<svg class="a" style="left:73.6px;top:255.5px" width="10" height="10" viewBox="0 0 10 10"><use href="#i_doc"/></svg>
<div class="t" style="left:85.0px;top:255.62px;font-size:9px;line-height:10.35px;color:#202020;font-weight:normal;transform:scaleX(0.8);transform-origin:0 0;">Listagens</div>
<div class="a" style="left:69.0px;top:271px;width:6px;height:1px;background:#d4d4d4"></div>
<div class="a" style="left:63.0px;top:268.25px;width:7px;height:7px;background:linear-gradient(#fff,#e4e4e4);border:1px solid #9a9a9a;border-radius:1px"></div>
<div class="a" style="left:64.5px;top:271.25px;width:4px;height:1px;background:#303030"></div>
<div class="a" style="left:66.0px;top:269.75px;width:1px;height:4px;background:#303030"></div>
<svg class="a" style="left:73.6px;top:266.25px" width="10" height="10" viewBox="0 0 10 10"><use href="#i_doc"/></svg>
<div class="t" style="left:85.0px;top:266.38px;font-size:9px;line-height:10.35px;color:#202020;font-weight:normal;transform:scaleX(0.8);transform-origin:0 0;">Dados</div>
<div class="a" style="left:57.8px;top:282px;width:6px;height:1px;background:#d4d4d4"></div>
<div class="a" style="left:51.8px;top:279.0px;width:7px;height:7px;background:linear-gradient(#fff,#e4e4e4);border:1px solid #9a9a9a;border-radius:1px"></div>
<div class="a" style="left:53.3px;top:282.0px;width:4px;height:1px;background:#303030"></div>
<div class="a" style="left:54.8px;top:280.5px;width:1px;height:4px;background:#303030"></div>
<svg class="a" style="left:62.39999999999999px;top:277.0px" width="10" height="10" viewBox="0 0 10 10"><use href="#i_pav"/></svg>
<div class="t" style="left:73.8px;top:277.12px;font-size:9px;line-height:10.35px;color:#202020;font-weight:normal;transform:scaleX(0.8);transform-origin:0 0;">Inferior</div>
<div class="a" style="left:35.4px;top:293px;width:6px;height:1px;background:#d4d4d4"></div>
<div class="a" style="left:29.4px;top:289.75px;width:7px;height:7px;background:linear-gradient(#fff,#e4e4e4);border:1px solid #9a9a9a;border-radius:1px"></div>
<div class="a" style="left:30.9px;top:292.75px;width:4px;height:1px;background:#303030"></div>
<svg class="a" style="left:40.0px;top:287.75px" width="10" height="10" viewBox="0 0 10 10"><use href="#i_bld"/></svg>
<div class="t" style="left:51.400000000000006px;top:287.88px;font-size:9px;line-height:10.35px;color:#202020;font-weight:normal;transform:scaleX(0.8);transform-origin:0 0;">Pratico_Pronto</div>
<div class="a" style="left:46.599999999999994px;top:304px;width:6px;height:1px;background:#d4d4d4"></div>
<div class="a" style="left:40.599999999999994px;top:300.5px;width:7px;height:7px;background:linear-gradient(#fff,#e4e4e4);border:1px solid #9a9a9a;border-radius:1px"></div>
<div class="a" style="left:42.099999999999994px;top:303.5px;width:4px;height:1px;background:#303030"></div>
<div class="a" style="left:43.599999999999994px;top:302.0px;width:1px;height:4px;background:#303030"></div>
<svg class="a" style="left:51.2px;top:298.5px" width="10" height="10" viewBox="0 0 10 10"><use href="#i_ger"/></svg>
<div class="t" style="left:62.6px;top:298.62px;font-size:9px;line-height:10.35px;color:#202020;font-weight:normal;transform:scaleX(0.8);transform-origin:0 0;">Gerais</div>
<div class="a" style="left:46.599999999999994px;top:314px;width:6px;height:1px;background:#d4d4d4"></div>
<div class="a" style="left:40.599999999999994px;top:311.25px;width:7px;height:7px;background:linear-gradient(#fff,#e4e4e4);border:1px solid #9a9a9a;border-radius:1px"></div>
<div class="a" style="left:42.099999999999994px;top:314.25px;width:4px;height:1px;background:#303030"></div>
<div class="a" style="left:43.599999999999994px;top:312.75px;width:1px;height:4px;background:#303030"></div>
<svg class="a" style="left:51.2px;top:309.25px" width="10" height="10" viewBox="0 0 10 10"><use href="#i_pla"/></svg>
<div class="t" style="left:62.6px;top:309.38px;font-size:9px;line-height:10.35px;color:#202020;font-weight:normal;transform:scaleX(0.8);transform-origin:0 0;">Plantas</div>
<div class="a" style="left:46.599999999999994px;top:325px;width:6px;height:1px;background:#d4d4d4"></div>
<div class="a" style="left:40.599999999999994px;top:322.0px;width:7px;height:7px;background:linear-gradient(#fff,#e4e4e4);border:1px solid #9a9a9a;border-radius:1px"></div>
<div class="a" style="left:42.099999999999994px;top:325.0px;width:4px;height:1px;background:#303030"></div>
<div class="a" style="left:43.599999999999994px;top:323.5px;width:1px;height:4px;background:#303030"></div>
<svg class="a" style="left:51.2px;top:320.0px" width="10" height="10" viewBox="0 0 10 10"><use href="#i_cri"/></svg>
<div class="t" style="left:62.6px;top:320.12px;font-size:9px;line-height:10.35px;color:#202020;font-weight:normal;transform:scaleX(0.8);transform-origin:0 0;">Critérios</div>
<div class="a" style="left:46.599999999999994px;top:336px;width:6px;height:1px;background:#d4d4d4"></div>
<div class="a" style="left:40.599999999999994px;top:332.75px;width:7px;height:7px;background:linear-gradient(#fff,#e4e4e4);border:1px solid #9a9a9a;border-radius:1px"></div>
<div class="a" style="left:42.099999999999994px;top:335.75px;width:4px;height:1px;background:#303030"></div>
<div class="a" style="left:43.599999999999994px;top:334.25px;width:1px;height:4px;background:#303030"></div>
<svg class="a" style="left:51.2px;top:330.75px" width="10" height="10" viewBox="0 0 10 10"><use href="#i_dwg"/></svg>
<div class="t" style="left:62.6px;top:330.88px;font-size:9px;line-height:10.35px;color:#202020;font-weight:normal;transform:scaleX(0.8);transform-origin:0 0;">Desenhos</div>
<div class="a" style="left:46.599999999999994px;top:346px;width:6px;height:1px;background:#d4d4d4"></div>
<div class="a" style="left:40.599999999999994px;top:343.5px;width:7px;height:7px;background:linear-gradient(#fff,#e4e4e4);border:1px solid #9a9a9a;border-radius:1px"></div>
<div class="a" style="left:42.099999999999994px;top:346.5px;width:4px;height:1px;background:#303030"></div>
<div class="a" style="left:43.599999999999994px;top:345.0px;width:1px;height:4px;background:#303030"></div>
<svg class="a" style="left:51.2px;top:341.5px" width="10" height="10" viewBox="0 0 10 10"><use href="#i_doc"/></svg>
<div class="t" style="left:62.6px;top:341.62px;font-size:9px;line-height:10.35px;color:#202020;font-weight:normal;transform:scaleX(0.8);transform-origin:0 0;">Listagens</div>
<div class="a" style="left:46.599999999999994px;top:357px;width:6px;height:1px;background:#d4d4d4"></div>
<div class="a" style="left:40.599999999999994px;top:354.25px;width:7px;height:7px;background:linear-gradient(#fff,#e4e4e4);border:1px solid #9a9a9a;border-radius:1px"></div>
<div class="a" style="left:42.099999999999994px;top:357.25px;width:4px;height:1px;background:#303030"></div>
<div class="a" style="left:43.599999999999994px;top:355.75px;width:1px;height:4px;background:#303030"></div>
<svg class="a" style="left:51.2px;top:352.25px" width="10" height="10" viewBox="0 0 10 10"><use href="#i_doc"/></svg>
<div class="t" style="left:62.6px;top:352.38px;font-size:9px;line-height:10.35px;color:#202020;font-weight:normal;transform:scaleX(0.8);transform-origin:0 0;">Dados</div>
<div class="a" style="left:46.599999999999994px;top:368px;width:6px;height:1px;background:#d4d4d4"></div>
<div class="a" style="left:40.599999999999994px;top:365.0px;width:7px;height:7px;background:linear-gradient(#fff,#e4e4e4);border:1px solid #9a9a9a;border-radius:1px"></div>
<div class="a" style="left:42.099999999999994px;top:368.0px;width:4px;height:1px;background:#303030"></div>
<div class="a" style="left:43.599999999999994px;top:366.5px;width:1px;height:4px;background:#303030"></div>
<svg class="a" style="left:51.2px;top:363.0px" width="10" height="10" viewBox="0 0 10 10"><use href="#i_esp"/></svg>
<div class="t" style="left:62.6px;top:363.12px;font-size:9px;line-height:10.35px;color:#202020;font-weight:normal;transform:scaleX(0.8);transform-origin:0 0;">Espacial</div>
<div class="a" style="left:46.599999999999994px;top:379px;width:6px;height:1px;background:#d4d4d4"></div>
<div class="a" style="left:40.599999999999994px;top:375.75px;width:7px;height:7px;background:linear-gradient(#fff,#e4e4e4);border:1px solid #9a9a9a;border-radius:1px"></div>
<div class="a" style="left:42.099999999999994px;top:378.75px;width:4px;height:1px;background:#303030"></div>
<div class="a" style="left:43.599999999999994px;top:377.25px;width:1px;height:4px;background:#303030"></div>
<svg class="a" style="left:51.2px;top:373.75px" width="10" height="10" viewBox="0 0 10 10"><use href="#i_pil"/></svg>
<div class="t" style="left:62.6px;top:373.88px;font-size:9px;line-height:10.35px;color:#202020;font-weight:normal;transform:scaleX(0.8);transform-origin:0 0;">Pilares</div>
<div class="a" style="left:46.599999999999994px;top:390px;width:6px;height:1px;background:#d4d4d4"></div>
<div class="a" style="left:40.599999999999994px;top:386.5px;width:7px;height:7px;background:linear-gradient(#fff,#e4e4e4);border:1px solid #9a9a9a;border-radius:1px"></div>
<div class="a" style="left:42.099999999999994px;top:389.5px;width:4px;height:1px;background:#303030"></div>
<svg class="a" style="left:51.2px;top:384.5px" width="10" height="10" viewBox="0 0 10 10"><use href="#i_pav"/></svg>
<div class="t" style="left:62.6px;top:384.62px;font-size:9px;line-height:10.35px;color:#202020;font-weight:normal;transform:scaleX(0.8);transform-origin:0 0;">Pavimentos</div>
<div class="a" style="left:57.8px;top:400px;width:6px;height:1px;background:#d4d4d4"></div>
<div class="a" style="left:51.8px;top:397.25px;width:7px;height:7px;background:linear-gradient(#fff,#e4e4e4);border:1px solid #9a9a9a;border-radius:1px"></div>
<div class="a" style="left:53.3px;top:400.25px;width:4px;height:1px;background:#303030"></div>
<div class="a" style="left:54.8px;top:398.75px;width:1px;height:4px;background:#303030"></div>
<svg class="a" style="left:62.39999999999999px;top:395.25px" width="10" height="10" viewBox="0 0 10 10"><use href="#i_pav"/></svg>
<div class="t" style="left:73.8px;top:395.38px;font-size:9px;line-height:10.35px;color:#202020;font-weight:normal;transform:scaleX(0.8);transform-origin:0 0;">Cobertura</div>
<div class="a" style="left:57.8px;top:411px;width:6px;height:1px;background:#d4d4d4"></div>
<div class="a" style="left:51.8px;top:408.0px;width:7px;height:7px;background:linear-gradient(#fff,#e4e4e4);border:1px solid #9a9a9a;border-radius:1px"></div>
<div class="a" style="left:53.3px;top:411.0px;width:4px;height:1px;background:#303030"></div>
<svg class="a" style="left:62.39999999999999px;top:406.0px" width="10" height="10" viewBox="0 0 10 10"><use href="#i_pav"/></svg>
<div class="t" style="left:73.8px;top:406.12px;font-size:9px;line-height:10.35px;color:#202020;font-weight:normal;transform:scaleX(0.8);transform-origin:0 0;">Superior</div>
<div class="a" style="left:69.0px;top:422px;width:6px;height:1px;background:#d4d4d4"></div>
<div class="a" style="left:63.0px;top:418.75px;width:7px;height:7px;background:linear-gradient(#fff,#e4e4e4);border:1px solid #9a9a9a;border-radius:1px"></div>
<div class="a" style="left:64.5px;top:421.75px;width:4px;height:1px;background:#303030"></div>
<div class="a" style="left:66.0px;top:420.25px;width:1px;height:4px;background:#303030"></div>
<svg class="a" style="left:73.6px;top:416.75px" width="10" height="10" viewBox="0 0 10 10"><use href="#i_vig"/></svg>
<div class="t" style="left:85.0px;top:416.88px;font-size:9px;line-height:10.35px;color:#202020;font-weight:normal;transform:scaleX(0.8);transform-origin:0 0;">Vigas</div>
<div class="a" style="left:69.0px;top:432px;width:6px;height:1px;background:#d4d4d4"></div>
<div class="a" style="left:63.0px;top:429.5px;width:7px;height:7px;background:linear-gradient(#fff,#e4e4e4);border:1px solid #9a9a9a;border-radius:1px"></div>
<div class="a" style="left:64.5px;top:432.5px;width:4px;height:1px;background:#303030"></div>
<div class="a" style="left:66.0px;top:431.0px;width:1px;height:4px;background:#303030"></div>
<svg class="a" style="left:73.6px;top:427.5px" width="10" height="10" viewBox="0 0 10 10"><use href="#i_cri"/></svg>
<div class="t" style="left:85.0px;top:427.62px;font-size:9px;line-height:10.35px;color:#202020;font-weight:normal;transform:scaleX(0.8);transform-origin:0 0;">Critérios</div>
<div class="a" style="left:69.0px;top:443px;width:6px;height:1px;background:#d4d4d4"></div>
<div class="a" style="left:63.0px;top:440.25px;width:7px;height:7px;background:linear-gradient(#fff,#e4e4e4);border:1px solid #9a9a9a;border-radius:1px"></div>
<div class="a" style="left:64.5px;top:443.25px;width:4px;height:1px;background:#303030"></div>
<div class="a" style="left:66.0px;top:441.75px;width:1px;height:4px;background:#303030"></div>
<svg class="a" style="left:73.6px;top:438.25px" width="10" height="10" viewBox="0 0 10 10"><use href="#i_dwg"/></svg>
<div class="t" style="left:85.0px;top:438.38px;font-size:9px;line-height:10.35px;color:#202020;font-weight:normal;transform:scaleX(0.8);transform-origin:0 0;">Desenhos</div>
<div class="a" style="left:69.0px;top:454px;width:6px;height:1px;background:#d4d4d4"></div>
<div class="a" style="left:63.0px;top:451.0px;width:7px;height:7px;background:linear-gradient(#fff,#e4e4e4);border:1px solid #9a9a9a;border-radius:1px"></div>
<div class="a" style="left:64.5px;top:454.0px;width:4px;height:1px;background:#303030"></div>
<div class="a" style="left:66.0px;top:452.5px;width:1px;height:4px;background:#303030"></div>
<svg class="a" style="left:73.6px;top:449.0px" width="10" height="10" viewBox="0 0 10 10"><use href="#i_doc"/></svg>
<div class="t" style="left:85.0px;top:449.12px;font-size:9px;line-height:10.35px;color:#202020;font-weight:normal;transform:scaleX(0.8);transform-origin:0 0;">Listagens</div>
<div class="a" style="left:69.0px;top:465px;width:6px;height:1px;background:#d4d4d4"></div>
<div class="a" style="left:63.0px;top:461.75px;width:7px;height:7px;background:linear-gradient(#fff,#e4e4e4);border:1px solid #9a9a9a;border-radius:1px"></div>
<div class="a" style="left:64.5px;top:464.75px;width:4px;height:1px;background:#303030"></div>
<div class="a" style="left:66.0px;top:463.25px;width:1px;height:4px;background:#303030"></div>
<svg class="a" style="left:73.6px;top:459.75px" width="10" height="10" viewBox="0 0 10 10"><use href="#i_doc"/></svg>
<div class="t" style="left:85.0px;top:459.88px;font-size:9px;line-height:10.35px;color:#202020;font-weight:normal;transform:scaleX(0.8);transform-origin:0 0;">Dados</div>
<div class="a" style="left:57.8px;top:476px;width:6px;height:1px;background:#d4d4d4"></div>
<div class="a" style="left:51.8px;top:472.5px;width:7px;height:7px;background:linear-gradient(#fff,#e4e4e4);border:1px solid #9a9a9a;border-radius:1px"></div>
<div class="a" style="left:53.3px;top:475.5px;width:4px;height:1px;background:#303030"></div>
<div class="a" style="left:54.8px;top:474.0px;width:1px;height:4px;background:#303030"></div>
<svg class="a" style="left:62.39999999999999px;top:470.5px" width="10" height="10" viewBox="0 0 10 10"><use href="#i_pav"/></svg>
<div class="t" style="left:73.8px;top:470.62px;font-size:9px;line-height:10.35px;color:#202020;font-weight:normal;transform:scaleX(0.8);transform-origin:0 0;">Fundacao</div>
<div class="a" style="left:46.599999999999994px;top:486px;width:6px;height:1px;background:#d4d4d4"></div>
<div class="a" style="left:40.599999999999994px;top:483.25px;width:7px;height:7px;background:linear-gradient(#fff,#e4e4e4);border:1px solid #9a9a9a;border-radius:1px"></div>
<div class="a" style="left:42.099999999999994px;top:486.25px;width:4px;height:1px;background:#303030"></div>
<div class="a" style="left:43.599999999999994px;top:484.75px;width:1px;height:4px;background:#303030"></div>
<svg class="a" style="left:51.2px;top:481.25px" width="10" height="10" viewBox="0 0 10 10"><use href="#i_fun"/></svg>
<div class="t" style="left:62.6px;top:481.38px;font-size:9px;line-height:10.35px;color:#202020;font-weight:normal;transform:scaleX(0.8);transform-origin:0 0;">Fundações</div>
<div class="a" style="left:189px;top:101px;width:4px;height:406px;background:#d8dae2"></div>
<div class="a" style="left:193px;top:101px;width:383px;height:406px;background:#eeeeee"></div>
<div class="a" style="left:196.5px;top:106.5px;width:343px;height:13.5px;background:#fff;border:1px solid #a8a8a8;box-shadow:inset 1px 1px 0 #e0e0e0"></div>
<svg class="a" style="left:198.5px;top:108px" width="10" height="10" viewBox="0 0 10 10"><g fill="#3a6ab8"><rect x="3" y="0.5" width="4" height="2.5"/><rect x="1" y="3" width="8" height="3"/><rect x="0" y="6" width="10" height="3.5"/></g><path d="M2 4.5h6M1 7.7h8M5 0v10" stroke="#c8d8f0" stroke-width="0.7"/></svg>
<svg class="a" style="left:211.5px;top:110.2px" width="4" height="6" viewBox="0 0 4 6"><polygon points="0,0 3.5,3 0,6" fill="#101010"/></svg>
<svg class="a" style="left:290.8px;top:110.2px" width="4" height="6" viewBox="0 0 4 6"><polygon points="0,0 3.5,3 0,6" fill="#101010"/></svg>
<svg class="a" style="left:351.3px;top:110.2px" width="4" height="6" viewBox="0 0 4 6"><polygon points="0,0 3.5,3 0,6" fill="#101010"/></svg>
<svg class="a" style="left:223px;top:108px" width="10" height="10" viewBox="0 0 10 10"><path d="M3 8.5V3a2 2 0 0 1 4 0v5.5z" fill="#eef2fa" stroke="#4a6ab0"/><path d="M1 9.5h8" stroke="#4a6ab0" stroke-width="1.2"/><path d="M2 8h6" stroke="#4a6ab0"/></svg>
<div class="t" style="left:236.8px;top:108.23px;font-size:9px;line-height:10.35px;color:#303030;font-weight:normal;transform:scaleX(0.8);transform-origin:0 0;">Pratico_Pronto</div>
<svg class="a" style="left:301.3px;top:108px" width="10" height="10" viewBox="0 0 10 10"><rect x="1" y="1" width="8" height="8" fill="#fff" stroke="#3a46a8" stroke-width="1.5"/><g fill="#c01818"><circle cx="1.2" cy="1.2" r="1.5"/><circle cx="8.8" cy="1.2" r="1.5"/><circle cx="1.2" cy="8.8" r="1.5"/><circle cx="8.8" cy="8.8" r="1.5"/></g></svg>
<div class="t" style="left:315px;top:108.23px;font-size:9px;line-height:10.35px;color:#303030;font-weight:normal;transform:scaleX(0.8);transform-origin:0 0;">Superior</div>
<svg class="a" style="left:531px;top:111.5px" width="6" height="4" viewBox="0 0 6 4"><polygon points="0,0 6,0 3,3.5" fill="#101010"/></svg>
<div class="a" style="left:541.5px;top:106.5px;width:17px;height:13.5px;background:linear-gradient(#f8f8f8,#e8e8e8);border:1px solid #c0c0c0"></div>
<svg class="a" style="left:544.5px;top:108px" width="11" height="11" viewBox="0 0 11 11"><path d="M8 2.3A4 4 0 1 0 9.3 5.5" fill="none" stroke="#1a4a98" stroke-width="1.6"/><polygon points="6,0.2 10,0.8 8.2,4.2" fill="#1a4a98"/></svg>
<div class="a" style="left:559px;top:106.5px;width:10px;height:13.5px;background:linear-gradient(#f8f8f8,#e8e8e8);border:1px solid #c0c0c0"></div>
<svg class="a" style="left:561.5px;top:111.5px" width="5" height="4" viewBox="0 0 5 4"><polygon points="0,0 5,0 2.5,3" fill="#101010"/></svg>
<div class="a" style="left:193px;top:121px;width:383px;height:2px;background:#e4e4e4"></div>
<div class="a" style="left:193px;top:123px;width:369px;height:24px;background:linear-gradient(#f6f6f6,#e2e2e2 70%,#d8d8d8);border-bottom:1px dotted #b8b8b8"></div>
<div class="t" style="left:203.5px;top:129.16px;font-size:10.5px;line-height:12.07px;color:#101010;font-weight:bold;transform:scaleX(0.86);transform-origin:0 0;">Superior</div>
<div class="a" style="left:248.3px;top:128.7px;width:66.7px;height:14px;background:linear-gradient(#eaeaea,#dcdcdc);border:1px solid #2a7ad8;box-shadow:inset 0 0 0 1px #9cc4f0"></div>
<svg class="a" style="left:267px;top:130px" width="11" height="11" viewBox="0 0 11 11"><path d="M5.5 0v4" stroke="#d01818" stroke-width="1.6"/><rect x="0.5" y="4.5" width="10" height="3" fill="#fff" stroke="#1a3a90"/><path d="M0.5 7.5h10" stroke="#1a3a90" stroke-width="1.5"/><path d="M2 8v3M9 8v3" stroke="#1a3a90" stroke-width="1.5"/></svg>
<div class="t" style="left:279.6px;top:130.82px;font-size:9px;line-height:10.35px;color:#303030;font-weight:normal;transform:scaleX(0.8);transform-origin:0 0;">Vigas</div>
<div class="a" style="left:320px;top:128.7px;width:67px;height:14px;background:linear-gradient(#ececec,#dedede);border:1px solid #c8c8c8"></div>
<svg class="a" style="left:334.5px;top:130px" width="10" height="11" viewBox="0 0 10 11"><path d="M1 9h3V6h3V3h2V1" fill="none" stroke="#2a4a98" stroke-width="1.3"/><path d="M0.5 10.5L9.5 1.5" stroke="#6a8ac8" stroke-width="0.6"/></svg>
<div class="t" style="left:347.3px;top:130.82px;font-size:9px;line-height:10.35px;color:#303030;font-weight:normal;transform:scaleX(0.8);transform-origin:0 0;">Escadas</div>
<div class="a" style="left:193px;top:146.5px;width:369px;height:359px;background:#4e5156"></div>
<div class="a" style="left:193px;top:146.5px;width:369px;height:1px;background:#3e4044"></div>
<div class="a" style="left:562px;top:123px;width:14px;height:382px;background:#efefef"></div>
<div class="a" style="left:563px;top:133px;width:8.5px;height:256.5px;background:#cdcdcd"></div>
<svg class="a" style="left:564px;top:126px" width="7" height="5" viewBox="0 0 7 5"><path d="M0.8 4L3.5 1.2 6.2 4" fill="none" stroke="#404040" stroke-width="1.1"/></svg>
<svg class="a" style="left:564px;top:498px" width="7" height="5" viewBox="0 0 7 5"><path d="M0.8 1L3.5 3.8 6.2 1" fill="none" stroke="#404040" stroke-width="1.1"/></svg>
<div class="a" style="left:572px;top:123px;width:4px;height:382px;background:#e2e2e2"></div>
<div class="a" style="left:193px;top:505px;width:383px;height:3px;background:#e6e6ea"></div>
<div class="a" style="left:16px;top:505px;width:177px;height:3px;background:#e6e6ea"></div>
<div class="a" style="left:205.5px;top:158.3px;width:136px;height:136px;background:rgba(0,0,0,.25)"></div>
<div class="a" style="left:204.5px;top:157.3px;width:136px;height:136px;background:linear-gradient(#444 0%,#3c3c3c 10%,#343434 20%,#262626 28%,#161616 36%,#080808 42%,#000 46%);border:1px solid #5a5c60"></div>
<div class="a" style="left:354.7px;top:158.3px;width:136px;height:136px;background:rgba(0,0,0,.25)"></div>
<div class="a" style="left:353.7px;top:157.3px;width:136px;height:136px;background:linear-gradient(#444 0%,#3c3c3c 10%,#343434 20%,#262626 28%,#161616 36%,#080808 42%,#000 46%);border:1px solid #5a5c60"></div>
<div class="a" style="left:205.5px;top:317px;width:136px;height:136px;background:rgba(0,0,0,.25)"></div>
<div class="a" style="left:204.5px;top:316px;width:136px;height:136px;background:linear-gradient(#444 0%,#3c3c3c 10%,#343434 20%,#262626 28%,#161616 36%,#080808 42%,#000 46%);border:1px solid #5a5c60"></div>
<div class="t" style="left:-27px;width:600px;text-align:center;top:296.84px;font-size:9.5px;line-height:10.92px;color:#e8e8e8;font-weight:bold;transform:scaleX(0.78);transform-origin:50% 0;">Modelo</div>
<div class="t" style="left:121.60000000000002px;width:600px;text-align:center;top:296.84px;font-size:9.5px;line-height:10.92px;color:#e8e8e8;font-weight:bold;transform:scaleX(0.78);transform-origin:50% 0;">Grelha</div>
<div class="t" style="left:-27px;width:600px;text-align:center;top:455.84px;font-size:9.5px;line-height:10.92px;color:#e8e8e8;font-weight:bold;transform:scaleX(0.78);transform-origin:50% 0;">Lajes</div>
<svg class="a" style="left:193px;top:146px" width="369" height="359" viewBox="193 146 369 359"><path d="M229.2 192L273 192" stroke="#d0d0d0" stroke-width="2.6"/><path d="M229.2 192L273 192" stroke="#3a3a3a" stroke-width="0.8"/><path d="M273 174.3L316.3 174.3" stroke="#d0d0d0" stroke-width="2.6"/><path d="M273 174.3L316.3 174.3" stroke="#3a3a3a" stroke-width="0.8"/><path d="M229.2 223L273 223" stroke="#d0d0d0" stroke-width="2.6"/><path d="M229.2 223L273 223" stroke="#3a3a3a" stroke-width="0.8"/><path d="M273 210.9L316.3 210.9" stroke="#d0d0d0" stroke-width="2.6"/><path d="M273 210.9L316.3 210.9" stroke="#3a3a3a" stroke-width="0.8"/><path d="M273 240.6L316.3 240.6" stroke="#d0d0d0" stroke-width="2.6"/><path d="M273 240.6L316.3 240.6" stroke="#3a3a3a" stroke-width="0.8"/><path d="M229.2 276.3L316.3 276.3" stroke="#d0d0d0" stroke-width="2.6"/><path d="M229.2 276.3L316.3 276.3" stroke="#3a3a3a" stroke-width="0.8"/><path d="M229.2 192L229.2 276.3" stroke="#d0d0d0" stroke-width="2.6"/><path d="M229.2 192L229.2 276.3" stroke="#3a3a3a" stroke-width="0.8"/><path d="M273 174.3L273 276.3" stroke="#d0d0d0" stroke-width="2.6"/><path d="M273 174.3L273 276.3" stroke="#3a3a3a" stroke-width="0.8"/><path d="M316.3 174.3L316.3 276.3" stroke="#d0d0d0" stroke-width="2.6"/><path d="M316.3 174.3L316.3 276.3" stroke="#3a3a3a" stroke-width="0.8"/><path d="M274 212L315.3 239.5M315.3 212L274 239.5" stroke="#2838c8" stroke-width="0.9"/><rect x="227.45" y="190.5" width="3.5" height="3" fill="none" stroke="#c01818" stroke-width="1.3"/><rect x="271.25" y="172.8" width="3.5" height="3" fill="none" stroke="#c01818" stroke-width="1.3"/><rect x="314.55" y="172.8" width="3.5" height="3" fill="none" stroke="#c01818" stroke-width="1.3"/><rect x="227.45" y="221.5" width="3.5" height="3" fill="none" stroke="#c01818" stroke-width="1.3"/><rect x="271.25" y="209.4" width="3.5" height="3" fill="none" stroke="#c01818" stroke-width="1.3"/><rect x="314.55" y="210.0" width="3.5" height="3" fill="none" stroke="#c01818" stroke-width="1.3"/><rect x="271.25" y="239.1" width="3.5" height="3" fill="none" stroke="#c01818" stroke-width="1.3"/><rect x="227.45" y="274.8" width="3.5" height="3" fill="none" stroke="#c01818" stroke-width="1.3"/><rect x="271.25" y="274.8" width="3.5" height="3" fill="none" stroke="#c01818" stroke-width="1.3"/><rect x="314.55" y="274.8" width="3.5" height="3" fill="none" stroke="#c01818" stroke-width="1.3"/><path d="M251 199.5l0 2h2.5" stroke="#20c020" stroke-width="1" fill="none"/><path d="M293 183l0 2h2.5" stroke="#20c020" stroke-width="1" fill="none"/><path d="M252 244l0 2h2.5" stroke="#20c020" stroke-width="1" fill="none"/><path d="M294 252l0 2h2.5" stroke="#20c020" stroke-width="1" fill="none"/><path d="M380.1 191.4V276.3" stroke="#22c4d0" stroke-width="0.9"/><path d="M384.4 191.4V276.3" stroke="#22c4d0" stroke-width="0.9"/><path d="M388.7 191.4V276.3" stroke="#22c4d0" stroke-width="0.9"/><path d="M393.0 191.4V276.3" stroke="#22c4d0" stroke-width="0.9"/><path d="M397.3 191.4V276.3" stroke="#22c4d0" stroke-width="0.9"/><path d="M401.6 191.4V276.3" stroke="#22c4d0" stroke-width="0.9"/><path d="M405.9 191.4V276.3" stroke="#22c4d0" stroke-width="0.9"/><path d="M410.2 191.4V276.3" stroke="#22c4d0" stroke-width="0.9"/><path d="M414.5 191.4V276.3" stroke="#22c4d0" stroke-width="0.9"/><path d="M418.8 191.4V276.3" stroke="#22c4d0" stroke-width="0.9"/><path d="M378.1 193.4H421.8" stroke="#22c4d0" stroke-width="0.9"/><path d="M378.1 197.7H421.8" stroke="#22c4d0" stroke-width="0.9"/><path d="M378.1 202.0H421.8" stroke="#22c4d0" stroke-width="0.9"/><path d="M378.1 206.3H421.8" stroke="#22c4d0" stroke-width="0.9"/><path d="M378.1 210.6H421.8" stroke="#22c4d0" stroke-width="0.9"/><path d="M378.1 214.9H421.8" stroke="#22c4d0" stroke-width="0.9"/><path d="M378.1 219.2H421.8" stroke="#22c4d0" stroke-width="0.9"/><path d="M378.1 223.5H421.8" stroke="#22c4d0" stroke-width="0.9"/><path d="M378.1 227.8H421.8" stroke="#22c4d0" stroke-width="0.9"/><path d="M378.1 232.1H421.8" stroke="#22c4d0" stroke-width="0.9"/><path d="M378.1 236.4H421.8" stroke="#22c4d0" stroke-width="0.9"/><path d="M378.1 240.7H421.8" stroke="#22c4d0" stroke-width="0.9"/><path d="M378.1 245.0H421.8" stroke="#22c4d0" stroke-width="0.9"/><path d="M378.1 249.3H421.8" stroke="#22c4d0" stroke-width="0.9"/><path d="M378.1 253.6H421.8" stroke="#22c4d0" stroke-width="0.9"/><path d="M378.1 257.9H421.8" stroke="#22c4d0" stroke-width="0.9"/><path d="M378.1 262.2H421.8" stroke="#22c4d0" stroke-width="0.9"/><path d="M378.1 266.5H421.8" stroke="#22c4d0" stroke-width="0.9"/><path d="M378.1 270.8H421.8" stroke="#22c4d0" stroke-width="0.9"/><path d="M378.1 275.1H421.8" stroke="#22c4d0" stroke-width="0.9"/><path d="M423.8 174.5V211.3" stroke="#22c4d0" stroke-width="0.9"/><path d="M428.1 174.5V211.3" stroke="#22c4d0" stroke-width="0.9"/><path d="M432.4 174.5V211.3" stroke="#22c4d0" stroke-width="0.9"/><path d="M436.7 174.5V211.3" stroke="#22c4d0" stroke-width="0.9"/><path d="M441.0 174.5V211.3" stroke="#22c4d0" stroke-width="0.9"/><path d="M445.3 174.5V211.3" stroke="#22c4d0" stroke-width="0.9"/><path d="M449.6 174.5V211.3" stroke="#22c4d0" stroke-width="0.9"/><path d="M453.9 174.5V211.3" stroke="#22c4d0" stroke-width="0.9"/><path d="M458.2 174.5V211.3" stroke="#22c4d0" stroke-width="0.9"/><path d="M462.5 174.5V211.3" stroke="#22c4d0" stroke-width="0.9"/><path d="M421.8 176.5H465.4" stroke="#22c4d0" stroke-width="0.9"/><path d="M421.8 180.8H465.4" stroke="#22c4d0" stroke-width="0.9"/><path d="M421.8 185.1H465.4" stroke="#22c4d0" stroke-width="0.9"/><path d="M421.8 189.4H465.4" stroke="#22c4d0" stroke-width="0.9"/><path d="M421.8 193.7H465.4" stroke="#22c4d0" stroke-width="0.9"/><path d="M421.8 198.0H465.4" stroke="#22c4d0" stroke-width="0.9"/><path d="M421.8 202.3H465.4" stroke="#22c4d0" stroke-width="0.9"/><path d="M421.8 206.6H465.4" stroke="#22c4d0" stroke-width="0.9"/><path d="M421.8 210.9H465.4" stroke="#22c4d0" stroke-width="0.9"/><path d="M423.8 240.5V276.3" stroke="#22c4d0" stroke-width="0.9"/><path d="M428.1 240.5V276.3" stroke="#22c4d0" stroke-width="0.9"/><path d="M432.4 240.5V276.3" stroke="#22c4d0" stroke-width="0.9"/><path d="M436.7 240.5V276.3" stroke="#22c4d0" stroke-width="0.9"/><path d="M441.0 240.5V276.3" stroke="#22c4d0" stroke-width="0.9"/><path d="M445.3 240.5V276.3" stroke="#22c4d0" stroke-width="0.9"/><path d="M449.6 240.5V276.3" stroke="#22c4d0" stroke-width="0.9"/><path d="M453.9 240.5V276.3" stroke="#22c4d0" stroke-width="0.9"/><path d="M458.2 240.5V276.3" stroke="#22c4d0" stroke-width="0.9"/><path d="M462.5 240.5V276.3" stroke="#22c4d0" stroke-width="0.9"/><path d="M421.8 242.5H465.4" stroke="#22c4d0" stroke-width="0.9"/><path d="M421.8 246.8H465.4" stroke="#22c4d0" stroke-width="0.9"/><path d="M421.8 251.1H465.4" stroke="#22c4d0" stroke-width="0.9"/><path d="M421.8 255.4H465.4" stroke="#22c4d0" stroke-width="0.9"/><path d="M421.8 259.7H465.4" stroke="#22c4d0" stroke-width="0.9"/><path d="M421.8 264.0H465.4" stroke="#22c4d0" stroke-width="0.9"/><path d="M421.8 268.3H465.4" stroke="#22c4d0" stroke-width="0.9"/><path d="M421.8 272.6H465.4" stroke="#22c4d0" stroke-width="0.9"/><path d="M378.1 191.4H421.8M421.8 174.5V191.4M421.8 211.3H465.4M421.8 240.5H465.4M421.8 240.5V276.3" stroke="#a08058" stroke-width="1.2" fill="none"/><path d="M421.8 174.5H465.4V211.3M378.1 191.4V222" stroke="#20b020" stroke-width="1.2" fill="none"/><path d="M378.1 222V276.3H465.4V240.5M421.8 211.3V240.5M465.4 211.3V240.5M378.1 222H421.8" stroke="#2040d0" stroke-width="1.2" fill="none"/><rect x="376.6" y="190.15" width="3" height="2.5" fill="none" stroke="#c01818" stroke-width="1.3"/><rect x="420.3" y="173.25" width="3" height="2.5" fill="none" stroke="#c01818" stroke-width="1.3"/><rect x="463.9" y="173.25" width="3" height="2.5" fill="none" stroke="#c01818" stroke-width="1.3"/><rect x="376.6" y="220.75" width="3" height="2.5" fill="none" stroke="#c01818" stroke-width="1.3"/><rect x="420.3" y="210.05" width="3" height="2.5" fill="none" stroke="#c01818" stroke-width="1.3"/><rect x="463.9" y="210.05" width="3" height="2.5" fill="none" stroke="#c01818" stroke-width="1.3"/><rect x="420.3" y="239.25" width="3" height="2.5" fill="none" stroke="#c01818" stroke-width="1.3"/><rect x="376.6" y="275.05" width="3" height="2.5" fill="none" stroke="#c01818" stroke-width="1.3"/><rect x="420.3" y="275.05" width="3" height="2.5" fill="none" stroke="#c01818" stroke-width="1.3"/><rect x="463.9" y="275.05" width="3" height="2.5" fill="none" stroke="#c01818" stroke-width="1.3"/><path d="M221.6 361.4L249.5 361.4" stroke="#d0d0d0" stroke-width="2.6"/><path d="M221.6 361.4L249.5 361.4" stroke="#3a3a3a" stroke-width="0.8"/><path d="M249.5 351L277.6 351" stroke="#d0d0d0" stroke-width="2.6"/><path d="M249.5 351L277.6 351" stroke="#3a3a3a" stroke-width="0.8"/><path d="M221.6 382.5L249.5 382.5" stroke="#d0d0d0" stroke-width="2.6"/><path d="M221.6 382.5L249.5 382.5" stroke="#3a3a3a" stroke-width="0.8"/><path d="M249.5 374.4L277.6 374.4" stroke="#d0d0d0" stroke-width="2.6"/><path d="M249.5 374.4L277.6 374.4" stroke="#3a3a3a" stroke-width="0.8"/><path d="M249.5 393.9L277.6 393.9" stroke="#d0d0d0" stroke-width="2.6"/><path d="M249.5 393.9L277.6 393.9" stroke="#3a3a3a" stroke-width="0.8"/><path d="M221.6 416.8L277.6 416.8" stroke="#d0d0d0" stroke-width="2.6"/><path d="M221.6 416.8L277.6 416.8" stroke="#3a3a3a" stroke-width="0.8"/><path d="M221.6 361.4L221.6 416.8" stroke="#d0d0d0" stroke-width="2.6"/><path d="M221.6 361.4L221.6 416.8" stroke="#3a3a3a" stroke-width="0.8"/><path d="M249.5 351L249.5 416.8" stroke="#d0d0d0" stroke-width="2.6"/><path d="M249.5 351L249.5 416.8" stroke="#3a3a3a" stroke-width="0.8"/><path d="M277.6 351L277.6 416.8" stroke="#d0d0d0" stroke-width="2.6"/><path d="M277.6 351L277.6 416.8" stroke="#3a3a3a" stroke-width="0.8"/><path d="M222.6 387H249.5M250.5 397.5H276.6M228 362V416M250.5 378H277.6" stroke="#20c8d8" stroke-width="0.9"/><path d="M222.6 378.5H248.5M227 384V415M250.5 371.5H276.6M256 352V372M255 396V415" stroke="#20c020" stroke-width="1"/><path d="M236 370v4M239 398l-2 1M262 358v3M263 400l2 0" stroke="#20c020" stroke-width="1.1"/><circle cx="221.6" cy="361.4" r="1" fill="#d04818"/><circle cx="249.5" cy="351" r="1" fill="#d04818"/><circle cx="277.6" cy="351" r="1" fill="#d04818"/><circle cx="221.6" cy="382.5" r="1" fill="#d04818"/><circle cx="249.5" cy="374.4" r="1" fill="#d04818"/><circle cx="277.6" cy="374.4" r="1" fill="#d04818"/><circle cx="249.5" cy="393.9" r="1" fill="#d04818"/><circle cx="221.6" cy="416.8" r="1" fill="#d04818"/><circle cx="249.5" cy="416.8" r="1" fill="#d04818"/><circle cx="277.6" cy="416.8" r="1" fill="#d04818"/><rect x="282.3" y="388.6" width="43" height="29" fill="none" stroke="#e0e0e0" stroke-width="0.8"/><rect x="287" y="396" width="12" height="12" fill="none" stroke="#e8e8e8" stroke-width="1.3"/><path d="M289 399h8M289 402h8M288 406h10" stroke="#c0c0c0" stroke-width="1" stroke-dasharray="1 1"/><rect x="287" y="405" width="12" height="3" fill="#e8e8e8"/><rect x="304" y="396" width="12" height="12" fill="none" stroke="#e8e8e8" stroke-width="1.3"/><path d="M306 399h8M306 402h8M305 406h10" stroke="#c0c0c0" stroke-width="1" stroke-dasharray="1 1"/><rect x="304" y="405" width="12" height="3" fill="#e8e8e8"/><path d="M300 406h3" stroke="#20c020" stroke-width="1.3"/></svg>
<div class="a" style="left:576px;top:101px;width:384px;height:406px;background:#e4e4e4"></div>
<svg class="a" style="left:576px;top:100px" width="383" height="405" viewBox="576 100 383 405">
<rect x="576" y="100" width="383" height="405" fill="#000"/>
<polygon fill="#528a9c" points="577,289 609,281.7 700,262 913.5,283.5 958.5,286.2 958.5,505 577,505"/>
<!-- ===== foundation level, back ===== -->
<polygon fill="#2468c4" points="755,308.5 790,313.5 891.2,329.2 891.2,338 790,323 755,318.6"/>
<polygon fill="#1f64c0" points="733.2,328 789,336.4 789,349 733.2,339.7"/>
<polygon fill="#0a4ea0" points="733.2,316.9 755,308.5 755,318.6 733.2,328"/>
<polygon fill="#e27ec8" points="743.3,327 758.5,319.5 773.8,321.1 770.4,332.1"/>
<polygon fill="#0a4ea0" points="789,336.4 809.6,322 809.6,334 789,349"/>
<polygon fill="#d472ba" points="809.6,348 827,329.2 834.4,351"/>
<polygon fill="#e882cc" points="827,329.2 843,335 834.4,351"/>
<polygon fill="#c060a8" points="809.6,348 834.4,351 834.4,354 809.6,351"/>
<polygon fill="#e27ec8" points="876,358 894,341 926,349.5 922,366.4 893,366 876,362"/>
<polygon fill="#c865b0" points="880,360 894,341 893,366"/>
<!-- middle-right beam -->
<polygon fill="#0a50a4" points="789,354 894,378.8 894,396 789,368.5"/>
<!-- left-back diagonal beam -->
<polygon fill="#0a4ea0" points="694.3,340.6 718,329.6 718,345 700,352 690,350"/>
<polygon fill="#1f64c0" points="694.3,339 718,328 718,330.5 694.3,341.5"/>
<!-- center footings (flat) -->
<polygon fill="#e27ec8" points="784.8,370 819.8,374.4 815.4,380.2 783.3,377.3"/>
<polygon fill="#e27ec8" points="773.5,378.3 807.4,386.8 809,395.2 773.5,388.4"/>
<polygon fill="#d878c0" points="754,406.5 793.5,412.3 792,418 752.7,410.8"/>
<!-- left bay: back beam -->
<polygon fill="#034a96" points="690,346.5 718,354.1 718,367.7 690,362.6"/>
<polygon fill="#034a96" points="733.2,354 772,365 765.3,376 733.2,371"/>
<!-- left bay: left beam -->
<polygon fill="#2a6cc8" points="633.4,378.7 690,346.5 690,362.6 652,385 635,386"/>
<!-- inner footing F3 -->
<polygon fill="#d472ba" points="660.8,380.2 691.5,362.7 697.3,390.4"/>
<polygon fill="#e882cc" points="691.5,362.7 719.2,370 697.3,390.4"/>
<polygon fill="#c060a8" points="660.8,380.2 697.3,390.4 697.3,393 660.8,383"/>
<!-- center beam going back (side face) -->
<polygon fill="#0a4ea0" points="736.7,402 789,354 789,368.5 757,395 736.7,425"/>
<!-- front-left foundation beam -->
<polygon fill="#034a96" points="631.7,384.6 720.6,406.5 720.6,426.9 631.7,400.6"/>
<!-- front-right foundation beam -->
<polygon fill="#034a96" points="757,387.5 882.5,415.2 882.5,436 757,406.5"/>
<polygon fill="#0a4ea0" points="736.7,402 757,387.5 757,406.5 736.7,425.4"/>
<!-- footing F8 -->
<polygon fill="#d070b8" points="859.8,405.4 878.4,385 880,427"/>
<polygon fill="#e882cc" points="878.4,385 919,395 915.7,427.4 880,427"/>
<polygon fill="#c060a8" points="915.7,427.4 919,395 919,400 916,433"/>
<!-- interior columns lower -->
<polygon fill="#5aaea3" points="685.8,300 694.3,300 694.3,346.5 685.8,346.5"/>
<polygon fill="#62b8ac" points="755,300 760,300 760,320 755,320"/>
<polygon fill="#0a4ea0" points="804,352.9 824.3,317.4 824.3,336 804,362"/><polygon fill="#5aaea3" points="800.6,305 807.4,305 807.4,353 800.6,353"/>
<polygon fill="#62b8ac" points="817.5,310 826,310 826,320 817.5,320"/>
<!-- ===== mid level ===== -->
<polygon fill="#0a56ac" points="688,263 731.8,255 800.8,260.4 827,250.5 761.9,281.5 733,290"/>
<polygon fill="#c4c4c4" points="731.8,252.4 756.6,247 822,250.6 800.8,260.4 731.8,255"/>
<polygon fill="#c4c4c4" points="762.8,280.7 826.5,251.5 899,254 896.5,293"/>
<polygon fill="#0c4c9c" points="795.5,265.7 896.5,273.6 896.5,275.3 793,267.3"/>
<polygon fill="#c4c4c4" points="621.7,281 688.3,263.3 772.5,272.8 761.9,280.7 733.3,290"/>
<polygon fill="#034a96" points="618.3,281 733.3,290 733.3,315 621.7,303.3"/>
<polygon fill="#0a4a9a" points="733.3,290 761.9,280.7 757.8,302.3 733.3,315"/>
<polygon fill="#0852a8" points="761.9,280.7 896.5,293 893.3,319.3 757.8,302.3"/>
<!-- interior columns upper -->
<polygon fill="#5aaea3" points="675,188.3 683.3,188.3 690.5,263.3 682.5,263.3"/><polygon fill="#6cc0b4" points="679,188.3 683.3,188.3 690.5,263.3 686.5,263.3"/>
<polygon fill="#62b8ac" points="751.7,185 760,185 759,252 755,252"/>
<polygon fill="#5aaea3" points="773.3,185 783.3,183.3 781,384.6 771.7,384.6"/>
<polygon fill="#6cc0b4" points="778,184 783.3,183.3 781,384.6 777,384.6"/>
<polygon fill="#5aaea3" points="803.3,188.3 811.7,186.7 808,260 801.7,260"/>
<polygon fill="#62b8ac" points="821.7,191.7 831.7,191.7 828,251.7 820,251.7"/>
<!-- ===== roof ===== -->
<polygon fill="#1a60c2" points="606.9,182.4 710.8,178.7 710.8,189.7"/>
<polygon fill="#034a96" points="603.2,156.9 710.8,148.9 710.8,178.7 606.9,182.4"/>
<polygon fill="#1a60c2" points="729,178.7 907.6,177 907.6,189.7 729,191.5"/>
<polygon fill="#0f58b4" points="830,184 907.6,183 907.6,186 830,187"/>
<polygon fill="#064a98" points="729,148.9 754.5,155 754.5,180.6 729,178.7"/>
<polygon fill="#0a56ac" points="754.5,155 909.5,145.9 907.6,177 754.5,180.6"/>
<polygon fill="#0c3c80" points="918.6,146 925.9,171.5 925.9,186 915,190"/>
<!-- front-left column -->
<polygon fill="#52a097" points="594.1,156.9 603.2,156.9 631,400 625,400"/>
<polygon fill="#6cc4b8" points="603,182 607.5,182 636,400 629,400"/>
<!-- front-center column -->
<polygon fill="#55a39b" points="710.8,148.9 729,147.8 731,236 735,335 737,431 723,431 720,335 714,236"/>
<!-- right corner column -->
<polygon fill="#0c3c80" points="917,195 923,195 900,420 894,420"/>
<polygon fill="#6cc4b8" points="916,184 925.9,188 902,425 892,438"/>
<polygon fill="#55a39b" points="909.5,145.9 918.6,145.2 892,438 881,438"/>
<!-- front footings -->
<polygon fill="#d070b8" points="587.8,423 632.3,400.4 632.3,440.2"/>
<polygon fill="#e882cc" points="632.3,400.4 669.4,414.4 632.3,440.2"/>
<polygon fill="#b85aa0" points="587.8,423 632.3,440.2 632.3,444.4 587.8,426.2"/>
<polygon fill="#d070b8" points="632.3,440.2 669.4,414.4 668.4,416.5 632.3,444.4"/>
<polygon fill="#d070b8" points="683.4,456.3 735,431.6 742.5,480"/>
<polygon fill="#e882cc" points="735,431.6 772.6,437 742.5,480"/>
<polygon fill="#b85aa0" points="683.4,456.3 742.5,480 742.5,485.3 683.4,461.6"/>
<polygon fill="#c060a8" points="742.5,480 772.6,437 772.6,442.3 742.5,485.3"/>
<polygon fill="#e27ec8" points="855.3,430.5 889.3,438.5 843.6,461"/>
<polygon fill="#e882cc" points="843.6,461 889.3,438.5 918,481.5"/>
<polygon fill="#b460a4" points="889.3,438.5 919.8,438.5 918,481.5"/>
<polygon fill="#d070b8" points="843.6,461 918,481.5 916.2,490.5 841.9,467.2"/>
</svg>

<div class="a" style="left:958.5px;top:101px;width:1.5px;height:406px;background:#e8e8e8"></div>
<div class="a" style="left:576px;top:100px;width:384px;height:1.6px;background:#d8d8d8"></div>
<div class="a" style="left:576px;top:100px;width:1px;height:407px;background:#c8c8c8"></div>
<div class="a" style="left:16px;top:508px;width:944px;height:46px;background:#dcdde6"></div>
<div class="a" style="left:16px;top:508.5px;width:919px;height:45px;background:#fff"></div>
<div class="t" style="left:16.2px;top:508.84px;font-size:9.5px;line-height:10.92px;color:#101010;font-weight:normal;transform:scaleX(0.78);transform-origin:0 0;">--- Transferência Global das cargas...</div>
<div class="t" style="left:16.2px;top:519.04px;font-size:9.5px;line-height:10.92px;color:#101010;font-weight:normal;transform:scaleX(0.78);transform-origin:0 0;">--- Transferência Global das cargas...</div>
<div class="t" style="left:16.2px;top:529.04px;font-size:9.5px;line-height:10.92px;color:#101010;font-weight:normal;transform:scaleX(0.8);transform-origin:0 0;">Ok.</div>
<div class="a" style="left:935px;top:508.5px;width:9px;height:45px;background:#f0f0f0"></div>
<div class="a" style="left:935.5px;top:533px;width:8px;height:9.5px;background:#cdcdcd"></div>
<svg class="a" style="left:936px;top:512px" width="7" height="5" viewBox="0 0 7 5"><path d="M0.8 4L3.5 1.2 6.2 4" fill="none" stroke="#303030" stroke-width="1.1"/></svg>
<svg class="a" style="left:936px;top:546px" width="7" height="5" viewBox="0 0 7 5"><path d="M0.8 1L3.5 3.8 6.2 1" fill="none" stroke="#303030" stroke-width="1.1"/></svg>
<svg class="a" style="left:946.5px;top:510.5px" width="10" height="10" viewBox="0 0 10 10"><rect x="0.5" y="2.5" width="8" height="7" fill="#e8eef8" stroke="#2a4a98"/><path d="M3 7L9 1" stroke="#2a5ab8" stroke-width="1.8"/></svg>
<svg class="a" style="left:946.5px;top:525.5px" width="10" height="10" viewBox="0 0 10 10"><rect x="0.5" y="3.5" width="8.5" height="6" fill="#fff" stroke="#2a4a98"/><rect x="1" y="4" width="5" height="3" fill="#40b0a0"/><path d="M4 5L9 0.5" stroke="#1a3a98" stroke-width="2"/></svg>
<div class="a" style="left:16px;top:553.5px;width:944px;height:26px;background:#f0f0f0;border-top:1px solid #dcdde6"></div>
<div class="a" style="left:49px;top:557.3px;width:54px;height:9.5px;background:#ececec;border-top:1px solid #c4c4c4;border-left:1px solid #d0d0d0"></div>
<div class="a" style="left:107px;top:557.3px;width:672px;height:9.5px;background:#ececec;border-top:1px solid #c4c4c4;border-left:1px solid #d0d0d0"></div>
<div class="a" style="left:49px;top:568px;width:54px;height:9.5px;background:#ececec;border-top:1px solid #c4c4c4;border-left:1px solid #d0d0d0"></div>
<div class="a" style="left:107px;top:568px;width:20px;height:9.5px;background:#ececec;border-top:1px solid #c4c4c4;border-left:1px solid #d0d0d0"></div>
<div class="a" style="left:187.5px;top:568px;width:60px;height:9.5px;background:#ececec;border-top:1px solid #c4c4c4;border-left:1px solid #d0d0d0"></div>
<div class="a" style="left:251px;top:568px;width:20px;height:9.5px;background:#ececec;border-top:1px solid #c4c4c4;border-left:1px solid #d0d0d0"></div>
<div class="a" style="left:271px;top:568px;width:508px;height:9.5px;background:#ececec;border-top:1px solid #c4c4c4;border-left:1px solid #d0d0d0"></div>
<div class="t" style="left:16.5px;top:557.01px;font-size:8.5px;line-height:9.77px;color:#303030;font-weight:normal;transform:scaleX(0.75);transform-origin:0 0;">Contrato</div>
<div class="t" style="left:49.5px;top:557.01px;font-size:8.5px;line-height:9.77px;color:#303030;font-weight:normal;transform:scaleX(0.8);transform-origin:0 0;">00000000</div>
<div class="t" style="left:107.5px;top:557.01px;font-size:8.5px;line-height:9.77px;color:#303030;font-weight:normal;transform:scaleX(0.77);transform-origin:0 0;">CAD/TQS VERSÃO EXCLUSIVA DE TREINAMENTO / USO NÃO PERMITIDO EM PROJETOS / USO NÃO COMERCIAL SP 00000-000 / 00.000.000/0000-00 / .</div>
<div class="t" style="left:16.5px;top:567.82px;font-size:8.5px;line-height:9.77px;color:#303030;font-weight:normal;transform:scaleX(0.77);transform-origin:0 0;">Edifício</div>
<div class="t" style="left:49.5px;top:567.82px;font-size:8.5px;line-height:9.77px;color:#303030;font-weight:normal;transform:scaleX(0.8);transform-origin:0 0;">Pratico_Pronto</div>
<div class="t" style="left:107.5px;top:567.82px;font-size:8.5px;line-height:9.77px;color:#303030;font-weight:normal;transform:scaleX(0.8);transform-origin:0 0;">0001</div>
<div class="t" style="left:134px;top:566.91px;font-size:8.5px;line-height:9.77px;color:#303030;font-weight:normal;transform:scaleX(0.74);transform-origin:0 0;">Pavimento</div>
<div class="t" style="left:188px;top:567.82px;font-size:8.5px;line-height:9.77px;color:#303030;font-weight:normal;transform:scaleX(0.8);transform-origin:0 0;">Superior</div>
<div class="t" style="left:251.5px;top:567.82px;font-size:8.5px;line-height:9.77px;color:#303030;font-weight:normal;transform:scaleX(0.8);transform-origin:0 0;">0003</div>
<div class="t" style="left:272.5px;top:567.82px;font-size:8.5px;line-height:9.77px;color:#303030;font-weight:normal;transform:scaleX(0.8);transform-origin:0 0;">C:\TQS\Pratico_Pronto\Superior</div>
<div class="a" style="left:16px;top:579.3px;width:944px;height:1px;background:#d0d0d0"></div>
<div class="a" style="left:16px;top:580.3px;width:944px;height:9.5px;background:#e8e8ec"></div>
<div class="t" style="left:18px;top:581.32px;font-size:8.5px;line-height:9.77px;color:#3a4a80;font-weight:normal;transform:scaleX(0.78);transform-origin:0 0;">Prj&nbsp;&nbsp;&nbsp; 3 Piso&nbsp; 1 Cota&nbsp;&nbsp; 2.70 PD 2.7 / Superior</div>
<div class="a" style="left:831.7px;top:580.5px;width:1px;height:9px;background:#cfcfd4"></div>
<div class="a" style="left:870.3px;top:580.5px;width:1px;height:9px;background:#cfcfd4"></div>
<div class="a" style="left:909.2px;top:580.5px;width:1px;height:9px;background:#cfcfd4"></div>
<div class="a" style="left:948.3px;top:580.5px;width:1px;height:9px;background:#cfcfd4"></div>
<div class="a" style="left:955px;top:584px;width:1.5px;height:1.5px;background:#a0a0a8"></div>
<div class="a" style="left:955px;top:587px;width:1.5px;height:1.5px;background:#a0a0a8"></div>
<div class="a" style="left:952px;top:587px;width:1.5px;height:1.5px;background:#a0a0a8"></div>
<div class="t" style="left:874px;top:581.12px;font-size:8.5px;line-height:9.77px;color:#9a9aa0;font-weight:normal;transform:scaleX(0.72);transform-origin:0 0;">TQS Formas</div>
<div class="t" style="left:913.3px;top:581.12px;font-size:8.5px;line-height:9.77px;color:#9a9aa0;font-weight:normal;transform:scaleX(0.74);transform-origin:0 0;">Modelo.DW</div>
</body></html>
